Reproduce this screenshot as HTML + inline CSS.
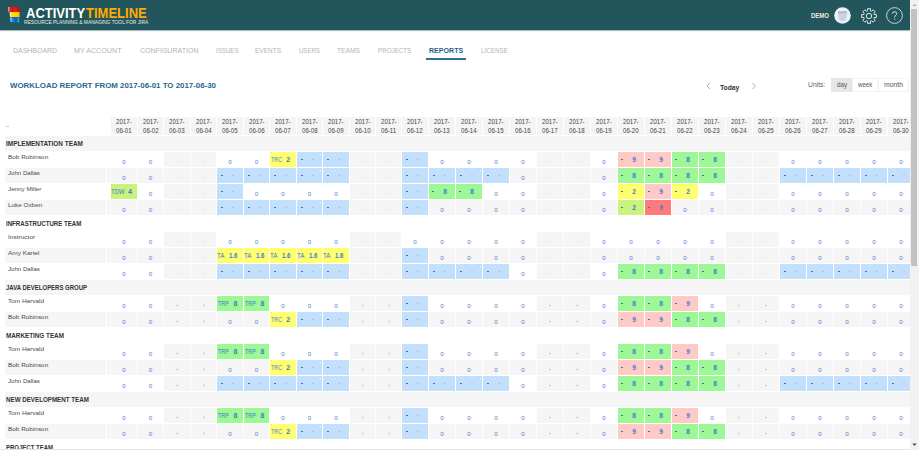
<!DOCTYPE html><html><head><meta charset="utf-8"><style>
html,body{margin:0;padding:0;width:919px;height:450px;overflow:hidden;background:#fff;font-family:"Liberation Sans", sans-serif;}
.t{position:absolute;white-space:nowrap;}
.r{position:absolute;}
#wrap{position:absolute;left:0;top:0;width:910px;height:450px;overflow:hidden;}
</style></head><body><div id="wrap">
<div class="r" style="left:0px;top:0px;width:910px;height:30px;background:#23565c;"></div>
<div class="r" style="left:0px;top:30px;width:910px;height:1px;background:#a9bec0;"></div>
<div class="r" style="left:0px;top:31px;width:910px;height:1px;background:#f7f9f9;"></div>
<svg class="r" style="left:7px;top:6px" width="14" height="18" viewBox="0 0 14 18">
<defs>
<linearGradient id="gr" x1="0" x2="1" y1="0" y2="0"><stop offset="0" stop-color="#f2b0b0"/><stop offset="0.25" stop-color="#e01010"/><stop offset="0.7" stop-color="#ff1010"/><stop offset="1" stop-color="#d00808"/></linearGradient>
<linearGradient id="gy" x1="0" x2="1" y1="0" y2="0"><stop offset="0" stop-color="#fff8b0"/><stop offset="0.25" stop-color="#ffe000"/><stop offset="0.7" stop-color="#ffd800"/><stop offset="1" stop-color="#f8b800"/></linearGradient>
<linearGradient id="gb" x1="0" x2="1" y1="0" y2="0"><stop offset="0" stop-color="#b0e0ff"/><stop offset="0.3" stop-color="#1a7ee0"/><stop offset="0.7" stop-color="#0a5fc8"/><stop offset="1" stop-color="#30b8ff"/></linearGradient>
</defs>
<polygon points="0.9,0.9 12.2,0.9 12.2,5.8 1.2,5.8" fill="url(#gr)"/>
<polygon points="2.6,6.1 12.6,6.1 12.6,11 3,11" fill="url(#gy)"/>
<polygon points="3.1,11.4 12.2,11.4 12.2,16.7 3.6,16.1" fill="url(#gb)"/>
</svg>
<div class="t" style="left:25.60px;top:4px;font-size:15.22px;line-height:17px;height:17px;color:#ffffff;font-weight:bold;transform:translateY(-0.5px) scaleX(0.8539);transform-origin:0 0;">ACTIVITY</div>
<div class="t" style="left:86.30px;top:4px;font-size:15.22px;line-height:17px;height:17px;color:#ffab00;font-weight:bold;transform:translateY(-0.5px) scaleX(0.8547);transform-origin:0 0;">TIMELINE</div>
<div class="t" style="left:24.20px;top:19px;font-size:5.07px;line-height:6px;height:6px;color:#e8eef0;font-weight:normal;transform:translateY(0px) scaleX(0.9630);transform-origin:0 0;">RESOURCE PLANNING &amp; MANAGING TOOL FOR JIRA</div>
<div class="t" style="left:811.00px;top:12px;font-size:6.52px;line-height:7px;height:7px;color:#f3ead8;font-weight:bold;transform:translateY(0px) scaleX(0.9200);transform-origin:0 0;">DEMO</div>
<svg class="r" style="left:833px;top:6px" width="20" height="20" viewBox="0 0 20 20">
<circle cx="9.5" cy="9.5" r="8.3" fill="#eef2f7"/>
<path d="M5,5.2 L14,5.2 Q14.6,11.5 12.3,14.3 Q9.5,16.4 6.7,14.3 Q4.4,11.5 5,5.2 Z" fill="#c8d5e1"/>
<path d="M5,5.2 L14,5.2 L13.9,7.6 L5.1,7.6 Z" fill="#aebfce"/>
</svg>
<svg class="r" style="left:860px;top:7px" width="18" height="18" viewBox="0 0 18 18">
<polygon points="14.19,7.50 16.35,7.50 16.35,10.50 14.19,10.50 13.73,11.61 15.26,13.14 13.14,15.26 11.61,13.73 10.50,14.19 10.50,16.35 7.50,16.35 7.50,14.19 6.39,13.73 4.86,15.26 2.74,13.14 4.27,11.61 3.81,10.50 1.65,10.50 1.65,7.50 3.81,7.50 4.27,6.39 2.74,4.86 4.86,2.74 6.39,4.27 7.50,3.81 7.50,1.65 10.50,1.65 10.50,3.81 11.61,4.27 13.14,2.74 15.26,4.86 13.73,6.39" fill="none" stroke="#dfe8e8" stroke-width="1" stroke-linejoin="miter"/>
<circle cx="9" cy="9" r="2.7" fill="none" stroke="#dfe8e8" stroke-width="1"/>
</svg>
<svg class="r" style="left:886px;top:7.3px" width="17" height="17" viewBox="0 0 17 17">
<circle cx="8.5" cy="8.5" r="7.9" fill="none" stroke="#d8e2e3" stroke-width="0.9"/>
<path d="M6.3,6.6 Q6.3,4.8 8.5,4.8 Q10.8,4.8 10.8,6.5 Q10.8,7.7 9.5,8.4 Q8.7,8.9 8.7,10.4" fill="none" stroke="#dfe8e8" stroke-width="1"/>
<rect x="8.2" y="11.6" width="1" height="1" fill="#dfe8e8"/>
</svg>
<div class="t" style="left:12.70px;top:47px;font-size:7.10px;line-height:8px;height:8px;color:#b4b4b4;font-weight:normal;transform:translateY(0px) scaleX(0.9823);transform-origin:0 0;">DASHBOARD</div>
<div class="t" style="left:74.30px;top:47px;font-size:7.10px;line-height:8px;height:8px;color:#b4b4b4;font-weight:normal;transform:translateY(0px) scaleX(1.0079);transform-origin:0 0;">MY ACCOUNT</div>
<div class="t" style="left:139.60px;top:47px;font-size:7.10px;line-height:8px;height:8px;color:#b4b4b4;font-weight:normal;transform:translateY(0px) scaleX(0.9923);transform-origin:0 0;">CONFIGURATION</div>
<div class="t" style="left:215.60px;top:47px;font-size:7.10px;line-height:8px;height:8px;color:#b4b4b4;font-weight:normal;transform:translateY(0px) scaleX(0.8674);transform-origin:0 0;">ISSUES</div>
<div class="t" style="left:255.00px;top:47px;font-size:7.10px;line-height:8px;height:8px;color:#b4b4b4;font-weight:normal;transform:translateY(0px) scaleX(0.9184);transform-origin:0 0;">EVENTS</div>
<div class="t" style="left:298.80px;top:47px;font-size:7.10px;line-height:8px;height:8px;color:#b4b4b4;font-weight:normal;transform:translateY(0px) scaleX(0.8502);transform-origin:0 0;">USERS</div>
<div class="t" style="left:337.00px;top:47px;font-size:7.10px;line-height:8px;height:8px;color:#b4b4b4;font-weight:normal;transform:translateY(0px) scaleX(0.9401);transform-origin:0 0;">TEAMS</div>
<div class="t" style="left:377.80px;top:47px;font-size:7.10px;line-height:8px;height:8px;color:#b4b4b4;font-weight:normal;transform:translateY(0px) scaleX(0.8791);transform-origin:0 0;">PROJECTS</div>
<div class="t" style="left:481.00px;top:47px;font-size:7.10px;line-height:8px;height:8px;color:#b4b4b4;font-weight:normal;transform:translateY(0px) scaleX(0.8850);transform-origin:0 0;">LICENSE</div>
<div class="t" style="left:428.80px;top:47px;font-size:7.10px;line-height:8px;height:8px;color:#1f5f8a;font-weight:bold;transform:translateY(0px) scaleX(0.9963);transform-origin:0 0;">REPORTS</div>
<div class="r" style="left:426px;top:57.5px;width:40px;height:2px;background:#2a6f98;"></div>
<div class="t" style="left:10.30px;top:82px;font-size:7.10px;line-height:8px;height:8px;color:#2a6690;font-weight:bold;transform:translateY(0px) scaleX(1.1127);transform-origin:0 0;">WORKLOAD REPORT FROM 2017-06-01 TO 2017-06-30</div>
<svg class="r" style="left:705px;top:82px" width="8" height="8" viewBox="0 0 8 8"><path d="M5,1 L2,4 L5,7" fill="none" stroke="#999" stroke-width="0.8"/></svg>
<svg class="r" style="left:750px;top:82px" width="8" height="8" viewBox="0 0 8 8"><path d="M2.5,1 L5.5,4 L2.5,7" fill="none" stroke="#999" stroke-width="0.8"/></svg>
<div class="t" style="left:720.30px;top:84px;font-size:6.81px;line-height:7px;height:7px;color:#333;font-weight:bold;transform:translateY(0px) scaleX(0.9866);transform-origin:0 0;">Today</div>
<div class="t" style="left:808.00px;top:81px;font-size:6.96px;line-height:7px;height:7px;color:#6b6357;font-weight:normal;transform:translateY(0px) scaleX(0.9786);transform-origin:0 0;">Units:</div>
<div class="r" style="left:831px;top:78px;width:21px;height:14px;background:#e6e6e6;"></div>
<div class="r" style="left:852px;top:78px;width:26px;height:14px;background:#fff;box-sizing:border-box;border:1px solid #f4f4f4;"></div>
<div class="r" style="left:877.5px;top:78px;width:31px;height:14px;background:#fff;box-sizing:border-box;border:1px solid #f4f4f4;"></div>
<div class="t" style="left:836.70px;top:81px;font-size:6.96px;line-height:7px;height:7px;color:#555;font-weight:normal;transform:translateY(0px) scaleX(0.9096);transform-origin:0 0;">day</div>
<div class="t" style="left:858.00px;top:81px;font-size:6.96px;line-height:7px;height:7px;color:#555;font-weight:normal;transform:translateY(0px) scaleX(0.8738);transform-origin:0 0;">week</div>
<div class="t" style="left:883.90px;top:81px;font-size:6.96px;line-height:7px;height:7px;color:#555;font-weight:normal;transform:translateY(0px) scaleX(0.9876);transform-origin:0 0;">month</div>
<div class="r" style="left:6px;top:126px;width:2.5px;height:0.8px;background:#c8c8c8;"></div>
<div class="r" style="left:111px;top:117px;width:26px;height:18px;background:#f4f4f4;"></div>
<div class="t" style="left:116.20px;top:118px;font-size:6.52px;line-height:7px;height:7px;color:#444;font-weight:normal;transform:translateY(0px) scaleX(0.9351);transform-origin:0 0;">2017-</div>
<div class="t" style="left:116.20px;top:127px;font-size:6.81px;line-height:7px;height:7px;color:#444;font-weight:normal;transform:translateY(0px) scaleX(0.8953);transform-origin:0 0;">06-01</div>
<div class="r" style="left:138px;top:117px;width:25px;height:18px;background:#f4f4f4;"></div>
<div class="t" style="left:142.70px;top:118px;font-size:6.52px;line-height:7px;height:7px;color:#444;font-weight:normal;transform:translateY(0px) scaleX(0.9351);transform-origin:0 0;">2017-</div>
<div class="t" style="left:142.70px;top:127px;font-size:6.81px;line-height:7px;height:7px;color:#444;font-weight:normal;transform:translateY(0px) scaleX(0.8953);transform-origin:0 0;">06-02</div>
<div class="r" style="left:164px;top:117px;width:26px;height:18px;background:#f4f4f4;"></div>
<div class="t" style="left:169.20px;top:118px;font-size:6.52px;line-height:7px;height:7px;color:#444;font-weight:normal;transform:translateY(0px) scaleX(0.9351);transform-origin:0 0;">2017-</div>
<div class="t" style="left:169.20px;top:127px;font-size:6.81px;line-height:7px;height:7px;color:#444;font-weight:normal;transform:translateY(0px) scaleX(0.8953);transform-origin:0 0;">06-03</div>
<div class="r" style="left:191px;top:117px;width:25px;height:18px;background:#f4f4f4;"></div>
<div class="t" style="left:195.70px;top:118px;font-size:6.52px;line-height:7px;height:7px;color:#444;font-weight:normal;transform:translateY(0px) scaleX(0.9351);transform-origin:0 0;">2017-</div>
<div class="t" style="left:195.70px;top:127px;font-size:6.81px;line-height:7px;height:7px;color:#444;font-weight:normal;transform:translateY(0px) scaleX(0.8953);transform-origin:0 0;">06-04</div>
<div class="r" style="left:217px;top:117px;width:26px;height:18px;background:#f4f4f4;"></div>
<div class="t" style="left:222.20px;top:118px;font-size:6.52px;line-height:7px;height:7px;color:#444;font-weight:normal;transform:translateY(0px) scaleX(0.9351);transform-origin:0 0;">2017-</div>
<div class="t" style="left:222.20px;top:127px;font-size:6.81px;line-height:7px;height:7px;color:#444;font-weight:normal;transform:translateY(0px) scaleX(0.8953);transform-origin:0 0;">06-05</div>
<div class="r" style="left:244px;top:117px;width:25px;height:18px;background:#f4f4f4;"></div>
<div class="t" style="left:248.70px;top:118px;font-size:6.52px;line-height:7px;height:7px;color:#444;font-weight:normal;transform:translateY(0px) scaleX(0.9351);transform-origin:0 0;">2017-</div>
<div class="t" style="left:248.70px;top:127px;font-size:6.81px;line-height:7px;height:7px;color:#444;font-weight:normal;transform:translateY(0px) scaleX(0.8953);transform-origin:0 0;">06-06</div>
<div class="r" style="left:270px;top:117px;width:26px;height:18px;background:#f4f4f4;"></div>
<div class="t" style="left:275.20px;top:118px;font-size:6.52px;line-height:7px;height:7px;color:#444;font-weight:normal;transform:translateY(0px) scaleX(0.9351);transform-origin:0 0;">2017-</div>
<div class="t" style="left:275.20px;top:127px;font-size:6.81px;line-height:7px;height:7px;color:#444;font-weight:normal;transform:translateY(0px) scaleX(0.8953);transform-origin:0 0;">06-07</div>
<div class="r" style="left:297px;top:117px;width:25px;height:18px;background:#f4f4f4;"></div>
<div class="t" style="left:301.70px;top:118px;font-size:6.52px;line-height:7px;height:7px;color:#444;font-weight:normal;transform:translateY(0px) scaleX(0.9351);transform-origin:0 0;">2017-</div>
<div class="t" style="left:301.70px;top:127px;font-size:6.81px;line-height:7px;height:7px;color:#444;font-weight:normal;transform:translateY(0px) scaleX(0.8953);transform-origin:0 0;">06-08</div>
<div class="r" style="left:323px;top:117px;width:26px;height:18px;background:#f4f4f4;"></div>
<div class="t" style="left:328.20px;top:118px;font-size:6.52px;line-height:7px;height:7px;color:#444;font-weight:normal;transform:translateY(0px) scaleX(0.9351);transform-origin:0 0;">2017-</div>
<div class="t" style="left:328.20px;top:127px;font-size:6.81px;line-height:7px;height:7px;color:#444;font-weight:normal;transform:translateY(0px) scaleX(0.8953);transform-origin:0 0;">06-09</div>
<div class="r" style="left:350px;top:117px;width:25px;height:18px;background:#f4f4f4;"></div>
<div class="t" style="left:354.70px;top:118px;font-size:6.52px;line-height:7px;height:7px;color:#444;font-weight:normal;transform:translateY(0px) scaleX(0.9351);transform-origin:0 0;">2017-</div>
<div class="t" style="left:354.70px;top:127px;font-size:6.81px;line-height:7px;height:7px;color:#444;font-weight:normal;transform:translateY(0px) scaleX(0.8953);transform-origin:0 0;">06-10</div>
<div class="r" style="left:376px;top:117px;width:25px;height:18px;background:#f4f4f4;"></div>
<div class="t" style="left:380.70px;top:118px;font-size:6.52px;line-height:7px;height:7px;color:#444;font-weight:normal;transform:translateY(0px) scaleX(0.9351);transform-origin:0 0;">2017-</div>
<div class="t" style="left:380.70px;top:127px;font-size:6.81px;line-height:7px;height:7px;color:#444;font-weight:normal;transform:translateY(0px) scaleX(0.8953);transform-origin:0 0;">06-11</div>
<div class="r" style="left:402px;top:117px;width:26px;height:18px;background:#f4f4f4;"></div>
<div class="t" style="left:407.20px;top:118px;font-size:6.52px;line-height:7px;height:7px;color:#444;font-weight:normal;transform:translateY(0px) scaleX(0.9351);transform-origin:0 0;">2017-</div>
<div class="t" style="left:407.20px;top:127px;font-size:6.81px;line-height:7px;height:7px;color:#444;font-weight:normal;transform:translateY(0px) scaleX(0.8953);transform-origin:0 0;">06-12</div>
<div class="r" style="left:429px;top:117px;width:26px;height:18px;background:#f4f4f4;"></div>
<div class="t" style="left:434.20px;top:118px;font-size:6.52px;line-height:7px;height:7px;color:#444;font-weight:normal;transform:translateY(0px) scaleX(0.9351);transform-origin:0 0;">2017-</div>
<div class="t" style="left:434.20px;top:127px;font-size:6.81px;line-height:7px;height:7px;color:#444;font-weight:normal;transform:translateY(0px) scaleX(0.8953);transform-origin:0 0;">06-13</div>
<div class="r" style="left:456px;top:117px;width:26px;height:18px;background:#f4f4f4;"></div>
<div class="t" style="left:461.20px;top:118px;font-size:6.52px;line-height:7px;height:7px;color:#444;font-weight:normal;transform:translateY(0px) scaleX(0.9351);transform-origin:0 0;">2017-</div>
<div class="t" style="left:461.20px;top:127px;font-size:6.81px;line-height:7px;height:7px;color:#444;font-weight:normal;transform:translateY(0px) scaleX(0.8953);transform-origin:0 0;">06-14</div>
<div class="r" style="left:483px;top:117px;width:26px;height:18px;background:#f4f4f4;"></div>
<div class="t" style="left:488.20px;top:118px;font-size:6.52px;line-height:7px;height:7px;color:#444;font-weight:normal;transform:translateY(0px) scaleX(0.9351);transform-origin:0 0;">2017-</div>
<div class="t" style="left:488.20px;top:127px;font-size:6.81px;line-height:7px;height:7px;color:#444;font-weight:normal;transform:translateY(0px) scaleX(0.8953);transform-origin:0 0;">06-15</div>
<div class="r" style="left:510px;top:117px;width:26px;height:18px;background:#f4f4f4;"></div>
<div class="t" style="left:515.20px;top:118px;font-size:6.52px;line-height:7px;height:7px;color:#444;font-weight:normal;transform:translateY(0px) scaleX(0.9351);transform-origin:0 0;">2017-</div>
<div class="t" style="left:515.20px;top:127px;font-size:6.81px;line-height:7px;height:7px;color:#444;font-weight:normal;transform:translateY(0px) scaleX(0.8953);transform-origin:0 0;">06-16</div>
<div class="r" style="left:537px;top:117px;width:26px;height:18px;background:#f4f4f4;"></div>
<div class="t" style="left:542.20px;top:118px;font-size:6.52px;line-height:7px;height:7px;color:#444;font-weight:normal;transform:translateY(0px) scaleX(0.9351);transform-origin:0 0;">2017-</div>
<div class="t" style="left:542.20px;top:127px;font-size:6.81px;line-height:7px;height:7px;color:#444;font-weight:normal;transform:translateY(0px) scaleX(0.8953);transform-origin:0 0;">06-17</div>
<div class="r" style="left:564px;top:117px;width:26px;height:18px;background:#f4f4f4;"></div>
<div class="t" style="left:569.20px;top:118px;font-size:6.52px;line-height:7px;height:7px;color:#444;font-weight:normal;transform:translateY(0px) scaleX(0.9351);transform-origin:0 0;">2017-</div>
<div class="t" style="left:569.20px;top:127px;font-size:6.81px;line-height:7px;height:7px;color:#444;font-weight:normal;transform:translateY(0px) scaleX(0.8953);transform-origin:0 0;">06-18</div>
<div class="r" style="left:591px;top:117px;width:26px;height:18px;background:#f4f4f4;"></div>
<div class="t" style="left:596.20px;top:118px;font-size:6.52px;line-height:7px;height:7px;color:#444;font-weight:normal;transform:translateY(0px) scaleX(0.9351);transform-origin:0 0;">2017-</div>
<div class="t" style="left:596.20px;top:127px;font-size:6.81px;line-height:7px;height:7px;color:#444;font-weight:normal;transform:translateY(0px) scaleX(0.8953);transform-origin:0 0;">06-19</div>
<div class="r" style="left:618px;top:117px;width:26px;height:18px;background:#f4f4f4;"></div>
<div class="t" style="left:623.20px;top:118px;font-size:6.52px;line-height:7px;height:7px;color:#444;font-weight:normal;transform:translateY(0px) scaleX(0.9351);transform-origin:0 0;">2017-</div>
<div class="t" style="left:623.20px;top:127px;font-size:6.81px;line-height:7px;height:7px;color:#444;font-weight:normal;transform:translateY(0px) scaleX(0.8953);transform-origin:0 0;">06-20</div>
<div class="r" style="left:645px;top:117px;width:26px;height:18px;background:#f4f4f4;"></div>
<div class="t" style="left:650.20px;top:118px;font-size:6.52px;line-height:7px;height:7px;color:#444;font-weight:normal;transform:translateY(0px) scaleX(0.9351);transform-origin:0 0;">2017-</div>
<div class="t" style="left:650.20px;top:127px;font-size:6.81px;line-height:7px;height:7px;color:#444;font-weight:normal;transform:translateY(0px) scaleX(0.8953);transform-origin:0 0;">06-21</div>
<div class="r" style="left:672px;top:117px;width:26px;height:18px;background:#f4f4f4;"></div>
<div class="t" style="left:677.20px;top:118px;font-size:6.52px;line-height:7px;height:7px;color:#444;font-weight:normal;transform:translateY(0px) scaleX(0.9351);transform-origin:0 0;">2017-</div>
<div class="t" style="left:677.20px;top:127px;font-size:6.81px;line-height:7px;height:7px;color:#444;font-weight:normal;transform:translateY(0px) scaleX(0.8953);transform-origin:0 0;">06-22</div>
<div class="r" style="left:699px;top:117px;width:26px;height:18px;background:#f4f4f4;"></div>
<div class="t" style="left:704.20px;top:118px;font-size:6.52px;line-height:7px;height:7px;color:#444;font-weight:normal;transform:translateY(0px) scaleX(0.9351);transform-origin:0 0;">2017-</div>
<div class="t" style="left:704.20px;top:127px;font-size:6.81px;line-height:7px;height:7px;color:#444;font-weight:normal;transform:translateY(0px) scaleX(0.8953);transform-origin:0 0;">06-23</div>
<div class="r" style="left:726px;top:117px;width:26px;height:18px;background:#f4f4f4;"></div>
<div class="t" style="left:731.20px;top:118px;font-size:6.52px;line-height:7px;height:7px;color:#444;font-weight:normal;transform:translateY(0px) scaleX(0.9351);transform-origin:0 0;">2017-</div>
<div class="t" style="left:731.20px;top:127px;font-size:6.81px;line-height:7px;height:7px;color:#444;font-weight:normal;transform:translateY(0px) scaleX(0.8953);transform-origin:0 0;">06-24</div>
<div class="r" style="left:753px;top:117px;width:26px;height:18px;background:#f4f4f4;"></div>
<div class="t" style="left:758.20px;top:118px;font-size:6.52px;line-height:7px;height:7px;color:#444;font-weight:normal;transform:translateY(0px) scaleX(0.9351);transform-origin:0 0;">2017-</div>
<div class="t" style="left:758.20px;top:127px;font-size:6.81px;line-height:7px;height:7px;color:#444;font-weight:normal;transform:translateY(0px) scaleX(0.8953);transform-origin:0 0;">06-25</div>
<div class="r" style="left:780px;top:117px;width:26px;height:18px;background:#f4f4f4;"></div>
<div class="t" style="left:785.20px;top:118px;font-size:6.52px;line-height:7px;height:7px;color:#444;font-weight:normal;transform:translateY(0px) scaleX(0.9351);transform-origin:0 0;">2017-</div>
<div class="t" style="left:785.20px;top:127px;font-size:6.81px;line-height:7px;height:7px;color:#444;font-weight:normal;transform:translateY(0px) scaleX(0.8953);transform-origin:0 0;">06-26</div>
<div class="r" style="left:807px;top:117px;width:26px;height:18px;background:#f4f4f4;"></div>
<div class="t" style="left:812.20px;top:118px;font-size:6.52px;line-height:7px;height:7px;color:#444;font-weight:normal;transform:translateY(0px) scaleX(0.9351);transform-origin:0 0;">2017-</div>
<div class="t" style="left:812.20px;top:127px;font-size:6.81px;line-height:7px;height:7px;color:#444;font-weight:normal;transform:translateY(0px) scaleX(0.8953);transform-origin:0 0;">06-27</div>
<div class="r" style="left:834px;top:117px;width:26px;height:18px;background:#f4f4f4;"></div>
<div class="t" style="left:839.20px;top:118px;font-size:6.52px;line-height:7px;height:7px;color:#444;font-weight:normal;transform:translateY(0px) scaleX(0.9351);transform-origin:0 0;">2017-</div>
<div class="t" style="left:839.20px;top:127px;font-size:6.81px;line-height:7px;height:7px;color:#444;font-weight:normal;transform:translateY(0px) scaleX(0.8953);transform-origin:0 0;">06-28</div>
<div class="r" style="left:861px;top:117px;width:26px;height:18px;background:#f4f4f4;"></div>
<div class="t" style="left:866.20px;top:118px;font-size:6.52px;line-height:7px;height:7px;color:#444;font-weight:normal;transform:translateY(0px) scaleX(0.9351);transform-origin:0 0;">2017-</div>
<div class="t" style="left:866.20px;top:127px;font-size:6.81px;line-height:7px;height:7px;color:#444;font-weight:normal;transform:translateY(0px) scaleX(0.8953);transform-origin:0 0;">06-29</div>
<div class="r" style="left:888px;top:117px;width:26px;height:18px;background:#f4f4f4;"></div>
<div class="t" style="left:893.20px;top:118px;font-size:6.52px;line-height:7px;height:7px;color:#444;font-weight:normal;transform:translateY(0px) scaleX(0.9351);transform-origin:0 0;">2017-</div>
<div class="t" style="left:893.20px;top:127px;font-size:6.81px;line-height:7px;height:7px;color:#444;font-weight:normal;transform:translateY(0px) scaleX(0.8953);transform-origin:0 0;">06-30</div>
<div class="r" style="left:5px;top:136px;width:905px;height:15px;background:#f5f5f5;"></div>
<div class="t" style="left:6.10px;top:139px;font-size:7.25px;line-height:9px;height:9px;color:#333;font-weight:bold;transform:translateY(0px) scaleX(0.8872);transform-origin:0 0;">IMPLEMENTATION TEAM</div>
<div class="t" style="left:7.90px;top:154px;font-size:5.80px;line-height:6px;height:6px;color:#4a4a4a;font-weight:normal;transform:translateY(0px) scaleX(1.1037);transform-origin:0 0;">Bob Robinson</div>
<div class="t" style="left:122.30px;top:158px;font-size:6.14px;line-height:7px;height:7px;color:#4a7fd6;font-weight:normal;">0</div>
<div class="t" style="left:148.80px;top:158px;font-size:6.14px;line-height:7px;height:7px;color:#4a7fd6;font-weight:normal;">0</div>
<div class="r" style="left:164px;top:152px;width:26px;height:15px;background:#f5f5f5;"></div>
<div class="r" style="left:176.0px;top:161.7px;width:2px;height:0.8px;background:#e2e7ee;"></div>
<div class="r" style="left:191px;top:152px;width:25px;height:15px;background:#f5f5f5;"></div>
<div class="r" style="left:202.5px;top:161.7px;width:2px;height:0.8px;background:#e2e7ee;"></div>
<div class="t" style="left:228.30px;top:158px;font-size:6.14px;line-height:7px;height:7px;color:#4a7fd6;font-weight:normal;">0</div>
<div class="t" style="left:254.80px;top:158px;font-size:6.14px;line-height:7px;height:7px;color:#4a7fd6;font-weight:normal;">0</div>
<div class="r" style="left:270px;top:152px;width:26px;height:15px;background:#ffff6e;"></div>
<div class="t" style="left:271.00px;top:156px;font-size:6.96px;line-height:7px;height:7px;color:#4a7fcf;font-weight:normal;transform:translateY(0px) scaleX(0.7691);transform-origin:0 0;">TRC</div>
<div class="t" style="left:286.30px;top:156px;font-size:6.96px;line-height:7px;height:7px;color:#3a78de;font-weight:bold;">2</div>
<div class="r" style="left:297px;top:152px;width:25px;height:15px;background:#c2dffb;"></div>
<div class="r" style="left:300.6px;top:159.2px;width:2.4px;height:0.9px;background:#3a6fd0;"></div>
<div class="r" style="left:311.8px;top:159.3px;width:2.0px;height:0.8px;background:#a9c8f0;"></div>
<div class="r" style="left:323px;top:152px;width:26px;height:15px;background:#c2dffb;"></div>
<div class="r" style="left:326.6px;top:159.2px;width:2.4px;height:0.9px;background:#3a6fd0;"></div>
<div class="r" style="left:337.8px;top:159.3px;width:2.0px;height:0.8px;background:#a9c8f0;"></div>
<div class="r" style="left:350px;top:152px;width:25px;height:15px;background:#f5f5f5;"></div>
<div class="r" style="left:361.5px;top:161.7px;width:2px;height:0.8px;background:#e2e7ee;"></div>
<div class="r" style="left:376px;top:152px;width:25px;height:15px;background:#f5f5f5;"></div>
<div class="r" style="left:387.5px;top:161.7px;width:2px;height:0.8px;background:#e2e7ee;"></div>
<div class="r" style="left:402px;top:152px;width:26px;height:15px;background:#c2dffb;"></div>
<div class="r" style="left:405.6px;top:159.2px;width:2.4px;height:0.9px;background:#3a6fd0;"></div>
<div class="r" style="left:416.8px;top:159.3px;width:2.0px;height:0.8px;background:#a9c8f0;"></div>
<div class="t" style="left:440.30px;top:158px;font-size:6.14px;line-height:7px;height:7px;color:#4a7fd6;font-weight:normal;">0</div>
<div class="t" style="left:467.30px;top:158px;font-size:6.14px;line-height:7px;height:7px;color:#4a7fd6;font-weight:normal;">0</div>
<div class="t" style="left:494.30px;top:158px;font-size:6.14px;line-height:7px;height:7px;color:#4a7fd6;font-weight:normal;">0</div>
<div class="t" style="left:521.30px;top:158px;font-size:6.14px;line-height:7px;height:7px;color:#4a7fd6;font-weight:normal;">0</div>
<div class="r" style="left:537px;top:152px;width:26px;height:15px;background:#f5f5f5;"></div>
<div class="r" style="left:549.0px;top:161.7px;width:2px;height:0.8px;background:#e2e7ee;"></div>
<div class="r" style="left:564px;top:152px;width:26px;height:15px;background:#f5f5f5;"></div>
<div class="r" style="left:576.0px;top:161.7px;width:2px;height:0.8px;background:#e2e7ee;"></div>
<div class="t" style="left:602.30px;top:158px;font-size:6.14px;line-height:7px;height:7px;color:#4a7fd6;font-weight:normal;">0</div>
<div class="r" style="left:618px;top:152px;width:26px;height:15px;background:#ffcac6;"></div>
<div class="r" style="left:621px;top:159.3px;width:2.2px;height:0.9px;background:#3a6fd0;"></div>
<div class="t" style="left:632.20px;top:156px;font-size:6.57px;line-height:7px;height:7px;color:#3a78de;font-weight:bold;">9</div>
<div class="r" style="left:645px;top:152px;width:26px;height:15px;background:#ffcac6;"></div>
<div class="r" style="left:648px;top:159.3px;width:2.2px;height:0.9px;background:#3a6fd0;"></div>
<div class="t" style="left:659.20px;top:156px;font-size:6.57px;line-height:7px;height:7px;color:#3a78de;font-weight:bold;">9</div>
<div class="r" style="left:672px;top:152px;width:26px;height:15px;background:#9cf794;"></div>
<div class="r" style="left:675px;top:159.3px;width:2.2px;height:0.9px;background:#3a6fd0;"></div>
<div class="t" style="left:686.20px;top:156px;font-size:6.57px;line-height:7px;height:7px;color:#3a78de;font-weight:bold;">8</div>
<div class="r" style="left:699px;top:152px;width:26px;height:15px;background:#9cf794;"></div>
<div class="r" style="left:702px;top:159.3px;width:2.2px;height:0.9px;background:#3a6fd0;"></div>
<div class="t" style="left:713.20px;top:156px;font-size:6.57px;line-height:7px;height:7px;color:#3a78de;font-weight:bold;">8</div>
<div class="r" style="left:726px;top:152px;width:26px;height:15px;background:#f5f5f5;"></div>
<div class="r" style="left:738.0px;top:161.7px;width:2px;height:0.8px;background:#e2e7ee;"></div>
<div class="r" style="left:753px;top:152px;width:26px;height:15px;background:#f5f5f5;"></div>
<div class="r" style="left:765.0px;top:161.7px;width:2px;height:0.8px;background:#e2e7ee;"></div>
<div class="t" style="left:791.30px;top:158px;font-size:6.14px;line-height:7px;height:7px;color:#4a7fd6;font-weight:normal;">0</div>
<div class="t" style="left:818.30px;top:158px;font-size:6.14px;line-height:7px;height:7px;color:#4a7fd6;font-weight:normal;">0</div>
<div class="t" style="left:845.30px;top:158px;font-size:6.14px;line-height:7px;height:7px;color:#4a7fd6;font-weight:normal;">0</div>
<div class="t" style="left:872.30px;top:158px;font-size:6.14px;line-height:7px;height:7px;color:#4a7fd6;font-weight:normal;">0</div>
<div class="t" style="left:899.30px;top:158px;font-size:6.14px;line-height:7px;height:7px;color:#4a7fd6;font-weight:normal;">0</div>
<div class="r" style="left:5px;top:168px;width:101px;height:15px;background:#f5f5f5;"></div>
<div class="r" style="left:107px;top:168px;width:3px;height:15px;background:#f5f5f5;"></div>
<div class="t" style="left:7.90px;top:170px;font-size:5.80px;line-height:6px;height:6px;color:#4a4a4a;font-weight:normal;transform:translateY(0px) scaleX(1.0528);transform-origin:0 0;">John Dallas</div>
<div class="r" style="left:111px;top:168px;width:26px;height:15px;background:#f5f5f5;"></div>
<div class="t" style="left:122.30px;top:174px;font-size:6.14px;line-height:7px;height:7px;color:#4a7fd6;font-weight:normal;">0</div>
<div class="r" style="left:138px;top:168px;width:25px;height:15px;background:#f5f5f5;"></div>
<div class="t" style="left:148.80px;top:174px;font-size:6.14px;line-height:7px;height:7px;color:#4a7fd6;font-weight:normal;">0</div>
<div class="r" style="left:164px;top:168px;width:26px;height:15px;background:#f5f5f5;"></div>
<div class="r" style="left:176.0px;top:177.7px;width:2px;height:0.8px;background:#e2e7ee;"></div>
<div class="r" style="left:191px;top:168px;width:25px;height:15px;background:#f5f5f5;"></div>
<div class="r" style="left:202.5px;top:177.7px;width:2px;height:0.8px;background:#e2e7ee;"></div>
<div class="r" style="left:217px;top:168px;width:26px;height:15px;background:#c2dffb;"></div>
<div class="r" style="left:220.6px;top:175.2px;width:2.4px;height:0.9px;background:#3a6fd0;"></div>
<div class="r" style="left:231.8px;top:175.3px;width:2.0px;height:0.8px;background:#a9c8f0;"></div>
<div class="r" style="left:244px;top:168px;width:25px;height:15px;background:#c2dffb;"></div>
<div class="r" style="left:247.6px;top:175.2px;width:2.4px;height:0.9px;background:#3a6fd0;"></div>
<div class="r" style="left:258.8px;top:175.3px;width:2.0px;height:0.8px;background:#a9c8f0;"></div>
<div class="r" style="left:270px;top:168px;width:26px;height:15px;background:#c2dffb;"></div>
<div class="r" style="left:273.6px;top:175.2px;width:2.4px;height:0.9px;background:#3a6fd0;"></div>
<div class="r" style="left:284.8px;top:175.3px;width:2.0px;height:0.8px;background:#a9c8f0;"></div>
<div class="r" style="left:297px;top:168px;width:25px;height:15px;background:#c2dffb;"></div>
<div class="r" style="left:300.6px;top:175.2px;width:2.4px;height:0.9px;background:#3a6fd0;"></div>
<div class="r" style="left:311.8px;top:175.3px;width:2.0px;height:0.8px;background:#a9c8f0;"></div>
<div class="r" style="left:323px;top:168px;width:26px;height:15px;background:#c2dffb;"></div>
<div class="r" style="left:326.6px;top:175.2px;width:2.4px;height:0.9px;background:#3a6fd0;"></div>
<div class="r" style="left:337.8px;top:175.3px;width:2.0px;height:0.8px;background:#a9c8f0;"></div>
<div class="r" style="left:350px;top:168px;width:25px;height:15px;background:#f5f5f5;"></div>
<div class="r" style="left:361.5px;top:177.7px;width:2px;height:0.8px;background:#e2e7ee;"></div>
<div class="r" style="left:376px;top:168px;width:25px;height:15px;background:#f5f5f5;"></div>
<div class="r" style="left:387.5px;top:177.7px;width:2px;height:0.8px;background:#e2e7ee;"></div>
<div class="r" style="left:402px;top:168px;width:26px;height:15px;background:#c2dffb;"></div>
<div class="r" style="left:405.6px;top:175.2px;width:2.4px;height:0.9px;background:#3a6fd0;"></div>
<div class="r" style="left:416.8px;top:175.3px;width:2.0px;height:0.8px;background:#a9c8f0;"></div>
<div class="r" style="left:429px;top:168px;width:26px;height:15px;background:#c2dffb;"></div>
<div class="r" style="left:432.6px;top:175.2px;width:2.4px;height:0.9px;background:#3a6fd0;"></div>
<div class="r" style="left:443.8px;top:175.3px;width:2.0px;height:0.8px;background:#a9c8f0;"></div>
<div class="r" style="left:456px;top:168px;width:26px;height:15px;background:#c2dffb;"></div>
<div class="r" style="left:459.6px;top:175.2px;width:2.4px;height:0.9px;background:#3a6fd0;"></div>
<div class="r" style="left:470.8px;top:175.3px;width:2.0px;height:0.8px;background:#a9c8f0;"></div>
<div class="r" style="left:483px;top:168px;width:26px;height:15px;background:#c2dffb;"></div>
<div class="r" style="left:486.6px;top:175.2px;width:2.4px;height:0.9px;background:#3a6fd0;"></div>
<div class="r" style="left:497.8px;top:175.3px;width:2.0px;height:0.8px;background:#a9c8f0;"></div>
<div class="r" style="left:510px;top:168px;width:26px;height:15px;background:#f5f5f5;"></div>
<div class="t" style="left:521.30px;top:174px;font-size:6.14px;line-height:7px;height:7px;color:#4a7fd6;font-weight:normal;">0</div>
<div class="r" style="left:537px;top:168px;width:26px;height:15px;background:#f5f5f5;"></div>
<div class="r" style="left:549.0px;top:177.7px;width:2px;height:0.8px;background:#e2e7ee;"></div>
<div class="r" style="left:564px;top:168px;width:26px;height:15px;background:#f5f5f5;"></div>
<div class="r" style="left:576.0px;top:177.7px;width:2px;height:0.8px;background:#e2e7ee;"></div>
<div class="r" style="left:591px;top:168px;width:26px;height:15px;background:#f5f5f5;"></div>
<div class="t" style="left:602.30px;top:174px;font-size:6.14px;line-height:7px;height:7px;color:#4a7fd6;font-weight:normal;">0</div>
<div class="r" style="left:618px;top:168px;width:26px;height:15px;background:#9cf794;"></div>
<div class="r" style="left:621px;top:175.3px;width:2.2px;height:0.9px;background:#3a6fd0;"></div>
<div class="t" style="left:632.20px;top:172px;font-size:6.57px;line-height:7px;height:7px;color:#3a78de;font-weight:bold;">8</div>
<div class="r" style="left:645px;top:168px;width:26px;height:15px;background:#9cf794;"></div>
<div class="r" style="left:648px;top:175.3px;width:2.2px;height:0.9px;background:#3a6fd0;"></div>
<div class="t" style="left:659.20px;top:172px;font-size:6.57px;line-height:7px;height:7px;color:#3a78de;font-weight:bold;">8</div>
<div class="r" style="left:672px;top:168px;width:26px;height:15px;background:#9cf794;"></div>
<div class="r" style="left:675px;top:175.3px;width:2.2px;height:0.9px;background:#3a6fd0;"></div>
<div class="t" style="left:686.20px;top:172px;font-size:6.57px;line-height:7px;height:7px;color:#3a78de;font-weight:bold;">8</div>
<div class="r" style="left:699px;top:168px;width:26px;height:15px;background:#9cf794;"></div>
<div class="r" style="left:702px;top:175.3px;width:2.2px;height:0.9px;background:#3a6fd0;"></div>
<div class="t" style="left:713.20px;top:172px;font-size:6.57px;line-height:7px;height:7px;color:#3a78de;font-weight:bold;">8</div>
<div class="r" style="left:726px;top:168px;width:26px;height:15px;background:#f5f5f5;"></div>
<div class="r" style="left:738.0px;top:177.7px;width:2px;height:0.8px;background:#e2e7ee;"></div>
<div class="r" style="left:753px;top:168px;width:26px;height:15px;background:#f5f5f5;"></div>
<div class="r" style="left:765.0px;top:177.7px;width:2px;height:0.8px;background:#e2e7ee;"></div>
<div class="r" style="left:780px;top:168px;width:26px;height:15px;background:#c2dffb;"></div>
<div class="r" style="left:783.6px;top:175.2px;width:2.4px;height:0.9px;background:#3a6fd0;"></div>
<div class="r" style="left:794.8px;top:175.3px;width:2.0px;height:0.8px;background:#a9c8f0;"></div>
<div class="r" style="left:807px;top:168px;width:26px;height:15px;background:#c2dffb;"></div>
<div class="r" style="left:810.6px;top:175.2px;width:2.4px;height:0.9px;background:#3a6fd0;"></div>
<div class="r" style="left:821.8px;top:175.3px;width:2.0px;height:0.8px;background:#a9c8f0;"></div>
<div class="r" style="left:834px;top:168px;width:26px;height:15px;background:#c2dffb;"></div>
<div class="r" style="left:837.6px;top:175.2px;width:2.4px;height:0.9px;background:#3a6fd0;"></div>
<div class="r" style="left:848.8px;top:175.3px;width:2.0px;height:0.8px;background:#a9c8f0;"></div>
<div class="r" style="left:861px;top:168px;width:26px;height:15px;background:#c2dffb;"></div>
<div class="r" style="left:864.6px;top:175.2px;width:2.4px;height:0.9px;background:#3a6fd0;"></div>
<div class="r" style="left:875.8px;top:175.3px;width:2.0px;height:0.8px;background:#a9c8f0;"></div>
<div class="r" style="left:888px;top:168px;width:26px;height:15px;background:#c2dffb;"></div>
<div class="r" style="left:891.6px;top:175.2px;width:2.4px;height:0.9px;background:#3a6fd0;"></div>
<div class="r" style="left:902.8px;top:175.3px;width:2.0px;height:0.8px;background:#a9c8f0;"></div>
<div class="t" style="left:7.90px;top:186px;font-size:5.80px;line-height:6px;height:6px;color:#4a4a4a;font-weight:normal;transform:translateY(0px) scaleX(1.0797);transform-origin:0 0;">Jenny Miller</div>
<div class="r" style="left:111px;top:184px;width:26px;height:15px;background:#cbf27a;"></div>
<div class="t" style="left:111.30px;top:188px;font-size:6.96px;line-height:7px;height:7px;color:#3f78d6;font-weight:normal;transform:translateY(0px) scaleX(0.8582);transform-origin:0 0;">TDW</div>
<div class="t" style="left:128.00px;top:188px;font-size:6.96px;line-height:7px;height:7px;color:#3a78de;font-weight:bold;">4</div>
<div class="t" style="left:148.80px;top:190px;font-size:6.14px;line-height:7px;height:7px;color:#4a7fd6;font-weight:normal;">0</div>
<div class="r" style="left:164px;top:184px;width:26px;height:15px;background:#f5f5f5;"></div>
<div class="r" style="left:176.0px;top:193.7px;width:2px;height:0.8px;background:#e2e7ee;"></div>
<div class="r" style="left:191px;top:184px;width:25px;height:15px;background:#f5f5f5;"></div>
<div class="r" style="left:202.5px;top:193.7px;width:2px;height:0.8px;background:#e2e7ee;"></div>
<div class="r" style="left:217px;top:184px;width:26px;height:15px;background:#c2dffb;"></div>
<div class="r" style="left:220.6px;top:191.2px;width:2.4px;height:0.9px;background:#3a6fd0;"></div>
<div class="r" style="left:231.8px;top:191.3px;width:2.0px;height:0.8px;background:#a9c8f0;"></div>
<div class="t" style="left:254.80px;top:190px;font-size:6.14px;line-height:7px;height:7px;color:#4a7fd6;font-weight:normal;">0</div>
<div class="t" style="left:281.30px;top:190px;font-size:6.14px;line-height:7px;height:7px;color:#4a7fd6;font-weight:normal;">0</div>
<div class="t" style="left:307.80px;top:190px;font-size:6.14px;line-height:7px;height:7px;color:#4a7fd6;font-weight:normal;">0</div>
<div class="t" style="left:334.30px;top:190px;font-size:6.14px;line-height:7px;height:7px;color:#4a7fd6;font-weight:normal;">0</div>
<div class="r" style="left:350px;top:184px;width:25px;height:15px;background:#f5f5f5;"></div>
<div class="r" style="left:361.5px;top:193.7px;width:2px;height:0.8px;background:#e2e7ee;"></div>
<div class="r" style="left:376px;top:184px;width:25px;height:15px;background:#f5f5f5;"></div>
<div class="r" style="left:387.5px;top:193.7px;width:2px;height:0.8px;background:#e2e7ee;"></div>
<div class="r" style="left:402px;top:184px;width:26px;height:15px;background:#c2dffb;"></div>
<div class="r" style="left:405.6px;top:191.2px;width:2.4px;height:0.9px;background:#3a6fd0;"></div>
<div class="r" style="left:416.8px;top:191.3px;width:2.0px;height:0.8px;background:#a9c8f0;"></div>
<div class="r" style="left:429px;top:184px;width:26px;height:15px;background:#9cf794;"></div>
<div class="r" style="left:432px;top:191.3px;width:2.2px;height:0.9px;background:#3a6fd0;"></div>
<div class="t" style="left:443.20px;top:188px;font-size:6.57px;line-height:7px;height:7px;color:#3a78de;font-weight:bold;">8</div>
<div class="r" style="left:456px;top:184px;width:26px;height:15px;background:#9cf794;"></div>
<div class="r" style="left:459px;top:191.3px;width:2.2px;height:0.9px;background:#3a6fd0;"></div>
<div class="t" style="left:470.20px;top:188px;font-size:6.57px;line-height:7px;height:7px;color:#3a78de;font-weight:bold;">8</div>
<div class="t" style="left:494.30px;top:190px;font-size:6.14px;line-height:7px;height:7px;color:#4a7fd6;font-weight:normal;">0</div>
<div class="t" style="left:521.30px;top:190px;font-size:6.14px;line-height:7px;height:7px;color:#4a7fd6;font-weight:normal;">0</div>
<div class="r" style="left:537px;top:184px;width:26px;height:15px;background:#f5f5f5;"></div>
<div class="r" style="left:549.0px;top:193.7px;width:2px;height:0.8px;background:#e2e7ee;"></div>
<div class="r" style="left:564px;top:184px;width:26px;height:15px;background:#f5f5f5;"></div>
<div class="r" style="left:576.0px;top:193.7px;width:2px;height:0.8px;background:#e2e7ee;"></div>
<div class="t" style="left:602.30px;top:190px;font-size:6.14px;line-height:7px;height:7px;color:#4a7fd6;font-weight:normal;">0</div>
<div class="r" style="left:618px;top:184px;width:26px;height:15px;background:#ffff6e;"></div>
<div class="r" style="left:621px;top:191.3px;width:2.2px;height:0.9px;background:#3a6fd0;"></div>
<div class="t" style="left:632.20px;top:188px;font-size:6.57px;line-height:7px;height:7px;color:#3a78de;font-weight:bold;">2</div>
<div class="r" style="left:645px;top:184px;width:26px;height:15px;background:#ffcac6;"></div>
<div class="r" style="left:648px;top:191.3px;width:2.2px;height:0.9px;background:#3a6fd0;"></div>
<div class="t" style="left:659.20px;top:188px;font-size:6.57px;line-height:7px;height:7px;color:#3a78de;font-weight:bold;">9</div>
<div class="r" style="left:672px;top:184px;width:26px;height:15px;background:#ffff6e;"></div>
<div class="r" style="left:675px;top:191.3px;width:2.2px;height:0.9px;background:#3a6fd0;"></div>
<div class="t" style="left:686.20px;top:188px;font-size:6.57px;line-height:7px;height:7px;color:#3a78de;font-weight:bold;">2</div>
<div class="t" style="left:710.30px;top:190px;font-size:6.14px;line-height:7px;height:7px;color:#4a7fd6;font-weight:normal;">0</div>
<div class="r" style="left:726px;top:184px;width:26px;height:15px;background:#f5f5f5;"></div>
<div class="r" style="left:738.0px;top:193.7px;width:2px;height:0.8px;background:#e2e7ee;"></div>
<div class="r" style="left:753px;top:184px;width:26px;height:15px;background:#f5f5f5;"></div>
<div class="r" style="left:765.0px;top:193.7px;width:2px;height:0.8px;background:#e2e7ee;"></div>
<div class="t" style="left:791.30px;top:190px;font-size:6.14px;line-height:7px;height:7px;color:#4a7fd6;font-weight:normal;">0</div>
<div class="t" style="left:818.30px;top:190px;font-size:6.14px;line-height:7px;height:7px;color:#4a7fd6;font-weight:normal;">0</div>
<div class="t" style="left:845.30px;top:190px;font-size:6.14px;line-height:7px;height:7px;color:#4a7fd6;font-weight:normal;">0</div>
<div class="t" style="left:872.30px;top:190px;font-size:6.14px;line-height:7px;height:7px;color:#4a7fd6;font-weight:normal;">0</div>
<div class="t" style="left:899.30px;top:190px;font-size:6.14px;line-height:7px;height:7px;color:#4a7fd6;font-weight:normal;">0</div>
<div class="r" style="left:5px;top:200px;width:101px;height:15px;background:#f5f5f5;"></div>
<div class="r" style="left:107px;top:200px;width:3px;height:15px;background:#f5f5f5;"></div>
<div class="t" style="left:7.90px;top:202px;font-size:5.80px;line-height:6px;height:6px;color:#4a4a4a;font-weight:normal;transform:translateY(0px) scaleX(1.0937);transform-origin:0 0;">Luke Oxben</div>
<div class="r" style="left:111px;top:200px;width:26px;height:15px;background:#f5f5f5;"></div>
<div class="t" style="left:122.30px;top:206px;font-size:6.14px;line-height:7px;height:7px;color:#4a7fd6;font-weight:normal;">0</div>
<div class="r" style="left:138px;top:200px;width:25px;height:15px;background:#f5f5f5;"></div>
<div class="t" style="left:148.80px;top:206px;font-size:6.14px;line-height:7px;height:7px;color:#4a7fd6;font-weight:normal;">0</div>
<div class="r" style="left:164px;top:200px;width:26px;height:15px;background:#f5f5f5;"></div>
<div class="r" style="left:176.0px;top:209.7px;width:2px;height:0.8px;background:#e2e7ee;"></div>
<div class="r" style="left:191px;top:200px;width:25px;height:15px;background:#f5f5f5;"></div>
<div class="r" style="left:202.5px;top:209.7px;width:2px;height:0.8px;background:#e2e7ee;"></div>
<div class="r" style="left:217px;top:200px;width:26px;height:15px;background:#c2dffb;"></div>
<div class="r" style="left:220.6px;top:207.2px;width:2.4px;height:0.9px;background:#3a6fd0;"></div>
<div class="r" style="left:231.8px;top:207.3px;width:2.0px;height:0.8px;background:#a9c8f0;"></div>
<div class="r" style="left:244px;top:200px;width:25px;height:15px;background:#c2dffb;"></div>
<div class="r" style="left:247.6px;top:207.2px;width:2.4px;height:0.9px;background:#3a6fd0;"></div>
<div class="r" style="left:258.8px;top:207.3px;width:2.0px;height:0.8px;background:#a9c8f0;"></div>
<div class="r" style="left:270px;top:200px;width:26px;height:15px;background:#c2dffb;"></div>
<div class="r" style="left:273.6px;top:207.2px;width:2.4px;height:0.9px;background:#3a6fd0;"></div>
<div class="r" style="left:284.8px;top:207.3px;width:2.0px;height:0.8px;background:#a9c8f0;"></div>
<div class="r" style="left:297px;top:200px;width:25px;height:15px;background:#c2dffb;"></div>
<div class="r" style="left:300.6px;top:207.2px;width:2.4px;height:0.9px;background:#3a6fd0;"></div>
<div class="r" style="left:311.8px;top:207.3px;width:2.0px;height:0.8px;background:#a9c8f0;"></div>
<div class="r" style="left:323px;top:200px;width:26px;height:15px;background:#c2dffb;"></div>
<div class="r" style="left:326.6px;top:207.2px;width:2.4px;height:0.9px;background:#3a6fd0;"></div>
<div class="r" style="left:337.8px;top:207.3px;width:2.0px;height:0.8px;background:#a9c8f0;"></div>
<div class="r" style="left:350px;top:200px;width:25px;height:15px;background:#f5f5f5;"></div>
<div class="r" style="left:361.5px;top:209.7px;width:2px;height:0.8px;background:#e2e7ee;"></div>
<div class="r" style="left:376px;top:200px;width:25px;height:15px;background:#f5f5f5;"></div>
<div class="r" style="left:387.5px;top:209.7px;width:2px;height:0.8px;background:#e2e7ee;"></div>
<div class="r" style="left:402px;top:200px;width:26px;height:15px;background:#c2dffb;"></div>
<div class="r" style="left:405.6px;top:207.2px;width:2.4px;height:0.9px;background:#3a6fd0;"></div>
<div class="r" style="left:416.8px;top:207.3px;width:2.0px;height:0.8px;background:#a9c8f0;"></div>
<div class="r" style="left:429px;top:200px;width:26px;height:15px;background:#f5f5f5;"></div>
<div class="t" style="left:440.30px;top:206px;font-size:6.14px;line-height:7px;height:7px;color:#4a7fd6;font-weight:normal;">0</div>
<div class="r" style="left:456px;top:200px;width:26px;height:15px;background:#f5f5f5;"></div>
<div class="t" style="left:467.30px;top:206px;font-size:6.14px;line-height:7px;height:7px;color:#4a7fd6;font-weight:normal;">0</div>
<div class="r" style="left:483px;top:200px;width:26px;height:15px;background:#f5f5f5;"></div>
<div class="t" style="left:494.30px;top:206px;font-size:6.14px;line-height:7px;height:7px;color:#4a7fd6;font-weight:normal;">0</div>
<div class="r" style="left:510px;top:200px;width:26px;height:15px;background:#f5f5f5;"></div>
<div class="t" style="left:521.30px;top:206px;font-size:6.14px;line-height:7px;height:7px;color:#4a7fd6;font-weight:normal;">0</div>
<div class="r" style="left:537px;top:200px;width:26px;height:15px;background:#f5f5f5;"></div>
<div class="r" style="left:549.0px;top:209.7px;width:2px;height:0.8px;background:#e2e7ee;"></div>
<div class="r" style="left:564px;top:200px;width:26px;height:15px;background:#f5f5f5;"></div>
<div class="r" style="left:576.0px;top:209.7px;width:2px;height:0.8px;background:#e2e7ee;"></div>
<div class="r" style="left:591px;top:200px;width:26px;height:15px;background:#f5f5f5;"></div>
<div class="t" style="left:602.30px;top:206px;font-size:6.14px;line-height:7px;height:7px;color:#4a7fd6;font-weight:normal;">0</div>
<div class="r" style="left:618px;top:200px;width:26px;height:15px;background:#cbf27a;"></div>
<div class="r" style="left:621px;top:207.3px;width:2.2px;height:0.9px;background:#3a6fd0;"></div>
<div class="t" style="left:632.20px;top:204px;font-size:6.57px;line-height:7px;height:7px;color:#3a78de;font-weight:bold;">2</div>
<div class="r" style="left:645px;top:200px;width:26px;height:15px;background:#ff7a7a;"></div>
<div class="r" style="left:648px;top:207.3px;width:2.2px;height:0.9px;background:#3a6fd0;"></div>
<div class="t" style="left:659.20px;top:204px;font-size:6.57px;line-height:7px;height:7px;color:#3a78de;font-weight:bold;">9</div>
<div class="r" style="left:672px;top:200px;width:26px;height:15px;background:#f5f5f5;"></div>
<div class="t" style="left:683.30px;top:206px;font-size:6.14px;line-height:7px;height:7px;color:#4a7fd6;font-weight:normal;">0</div>
<div class="r" style="left:699px;top:200px;width:26px;height:15px;background:#f5f5f5;"></div>
<div class="t" style="left:710.30px;top:206px;font-size:6.14px;line-height:7px;height:7px;color:#4a7fd6;font-weight:normal;">0</div>
<div class="r" style="left:726px;top:200px;width:26px;height:15px;background:#f5f5f5;"></div>
<div class="r" style="left:738.0px;top:209.7px;width:2px;height:0.8px;background:#e2e7ee;"></div>
<div class="r" style="left:753px;top:200px;width:26px;height:15px;background:#f5f5f5;"></div>
<div class="r" style="left:765.0px;top:209.7px;width:2px;height:0.8px;background:#e2e7ee;"></div>
<div class="r" style="left:780px;top:200px;width:26px;height:15px;background:#f5f5f5;"></div>
<div class="t" style="left:791.30px;top:206px;font-size:6.14px;line-height:7px;height:7px;color:#4a7fd6;font-weight:normal;">0</div>
<div class="r" style="left:807px;top:200px;width:26px;height:15px;background:#f5f5f5;"></div>
<div class="t" style="left:818.30px;top:206px;font-size:6.14px;line-height:7px;height:7px;color:#4a7fd6;font-weight:normal;">0</div>
<div class="r" style="left:834px;top:200px;width:26px;height:15px;background:#f5f5f5;"></div>
<div class="t" style="left:845.30px;top:206px;font-size:6.14px;line-height:7px;height:7px;color:#4a7fd6;font-weight:normal;">0</div>
<div class="r" style="left:861px;top:200px;width:26px;height:15px;background:#f5f5f5;"></div>
<div class="t" style="left:872.30px;top:206px;font-size:6.14px;line-height:7px;height:7px;color:#4a7fd6;font-weight:normal;">0</div>
<div class="r" style="left:888px;top:200px;width:26px;height:15px;background:#f5f5f5;"></div>
<div class="t" style="left:899.30px;top:206px;font-size:6.14px;line-height:7px;height:7px;color:#4a7fd6;font-weight:normal;">0</div>
<div class="t" style="left:6.10px;top:219px;font-size:7.25px;line-height:9px;height:9px;color:#333;font-weight:bold;transform:translateY(0px) scaleX(0.8426);transform-origin:0 0;">INFRASTRUCTURE TEAM</div>
<div class="t" style="left:7.90px;top:234px;font-size:5.80px;line-height:6px;height:6px;color:#4a4a4a;font-weight:normal;transform:translateY(0px) scaleX(1.1254);transform-origin:0 0;">Instructor</div>
<div class="t" style="left:122.30px;top:238px;font-size:6.14px;line-height:7px;height:7px;color:#4a7fd6;font-weight:normal;">0</div>
<div class="t" style="left:148.80px;top:238px;font-size:6.14px;line-height:7px;height:7px;color:#4a7fd6;font-weight:normal;">0</div>
<div class="r" style="left:164px;top:232px;width:26px;height:15px;background:#f5f5f5;"></div>
<div class="r" style="left:176.0px;top:241.7px;width:2px;height:0.8px;background:#e2e7ee;"></div>
<div class="r" style="left:191px;top:232px;width:25px;height:15px;background:#f5f5f5;"></div>
<div class="r" style="left:202.5px;top:241.7px;width:2px;height:0.8px;background:#e2e7ee;"></div>
<div class="t" style="left:228.30px;top:238px;font-size:6.14px;line-height:7px;height:7px;color:#4a7fd6;font-weight:normal;">0</div>
<div class="t" style="left:254.80px;top:238px;font-size:6.14px;line-height:7px;height:7px;color:#4a7fd6;font-weight:normal;">0</div>
<div class="t" style="left:281.30px;top:238px;font-size:6.14px;line-height:7px;height:7px;color:#4a7fd6;font-weight:normal;">0</div>
<div class="t" style="left:307.80px;top:238px;font-size:6.14px;line-height:7px;height:7px;color:#4a7fd6;font-weight:normal;">0</div>
<div class="t" style="left:334.30px;top:238px;font-size:6.14px;line-height:7px;height:7px;color:#4a7fd6;font-weight:normal;">0</div>
<div class="r" style="left:350px;top:232px;width:25px;height:15px;background:#f5f5f5;"></div>
<div class="r" style="left:361.5px;top:241.7px;width:2px;height:0.8px;background:#e2e7ee;"></div>
<div class="r" style="left:376px;top:232px;width:25px;height:15px;background:#f5f5f5;"></div>
<div class="r" style="left:387.5px;top:241.7px;width:2px;height:0.8px;background:#e2e7ee;"></div>
<div class="t" style="left:413.30px;top:238px;font-size:6.14px;line-height:7px;height:7px;color:#4a7fd6;font-weight:normal;">0</div>
<div class="t" style="left:440.30px;top:238px;font-size:6.14px;line-height:7px;height:7px;color:#4a7fd6;font-weight:normal;">0</div>
<div class="t" style="left:467.30px;top:238px;font-size:6.14px;line-height:7px;height:7px;color:#4a7fd6;font-weight:normal;">0</div>
<div class="t" style="left:494.30px;top:238px;font-size:6.14px;line-height:7px;height:7px;color:#4a7fd6;font-weight:normal;">0</div>
<div class="t" style="left:521.30px;top:238px;font-size:6.14px;line-height:7px;height:7px;color:#4a7fd6;font-weight:normal;">0</div>
<div class="r" style="left:537px;top:232px;width:26px;height:15px;background:#f5f5f5;"></div>
<div class="r" style="left:549.0px;top:241.7px;width:2px;height:0.8px;background:#e2e7ee;"></div>
<div class="r" style="left:564px;top:232px;width:26px;height:15px;background:#f5f5f5;"></div>
<div class="r" style="left:576.0px;top:241.7px;width:2px;height:0.8px;background:#e2e7ee;"></div>
<div class="t" style="left:602.30px;top:238px;font-size:6.14px;line-height:7px;height:7px;color:#4a7fd6;font-weight:normal;">0</div>
<div class="t" style="left:629.30px;top:238px;font-size:6.14px;line-height:7px;height:7px;color:#4a7fd6;font-weight:normal;">0</div>
<div class="t" style="left:656.30px;top:238px;font-size:6.14px;line-height:7px;height:7px;color:#4a7fd6;font-weight:normal;">0</div>
<div class="t" style="left:683.30px;top:238px;font-size:6.14px;line-height:7px;height:7px;color:#4a7fd6;font-weight:normal;">0</div>
<div class="t" style="left:710.30px;top:238px;font-size:6.14px;line-height:7px;height:7px;color:#4a7fd6;font-weight:normal;">0</div>
<div class="r" style="left:726px;top:232px;width:26px;height:15px;background:#f5f5f5;"></div>
<div class="r" style="left:738.0px;top:241.7px;width:2px;height:0.8px;background:#e2e7ee;"></div>
<div class="r" style="left:753px;top:232px;width:26px;height:15px;background:#f5f5f5;"></div>
<div class="r" style="left:765.0px;top:241.7px;width:2px;height:0.8px;background:#e2e7ee;"></div>
<div class="t" style="left:791.30px;top:238px;font-size:6.14px;line-height:7px;height:7px;color:#4a7fd6;font-weight:normal;">0</div>
<div class="t" style="left:818.30px;top:238px;font-size:6.14px;line-height:7px;height:7px;color:#4a7fd6;font-weight:normal;">0</div>
<div class="t" style="left:845.30px;top:238px;font-size:6.14px;line-height:7px;height:7px;color:#4a7fd6;font-weight:normal;">0</div>
<div class="t" style="left:872.30px;top:238px;font-size:6.14px;line-height:7px;height:7px;color:#4a7fd6;font-weight:normal;">0</div>
<div class="t" style="left:899.30px;top:238px;font-size:6.14px;line-height:7px;height:7px;color:#4a7fd6;font-weight:normal;">0</div>
<div class="r" style="left:5px;top:248px;width:101px;height:15px;background:#f5f5f5;"></div>
<div class="r" style="left:107px;top:248px;width:3px;height:15px;background:#f5f5f5;"></div>
<div class="t" style="left:7.90px;top:250px;font-size:5.80px;line-height:6px;height:6px;color:#4a4a4a;font-weight:normal;transform:translateY(0px) scaleX(1.1110);transform-origin:0 0;">Amy Kartel</div>
<div class="r" style="left:111px;top:248px;width:26px;height:15px;background:#f5f5f5;"></div>
<div class="t" style="left:122.30px;top:254px;font-size:6.14px;line-height:7px;height:7px;color:#4a7fd6;font-weight:normal;">0</div>
<div class="r" style="left:138px;top:248px;width:25px;height:15px;background:#f5f5f5;"></div>
<div class="t" style="left:148.80px;top:254px;font-size:6.14px;line-height:7px;height:7px;color:#4a7fd6;font-weight:normal;">0</div>
<div class="r" style="left:164px;top:248px;width:26px;height:15px;background:#f5f5f5;"></div>
<div class="r" style="left:176.0px;top:257.7px;width:2px;height:0.8px;background:#e2e7ee;"></div>
<div class="r" style="left:191px;top:248px;width:25px;height:15px;background:#f5f5f5;"></div>
<div class="r" style="left:202.5px;top:257.7px;width:2px;height:0.8px;background:#e2e7ee;"></div>
<div class="r" style="left:217px;top:248px;width:26px;height:15px;background:#ffff6e;"></div>
<div class="t" style="left:217.30px;top:252px;font-size:6.81px;line-height:7px;height:7px;color:#3f78d6;font-weight:normal;transform:translateY(0px) scaleX(0.9137);transform-origin:0 0;">TA</div>
<div class="t" style="left:229.00px;top:252px;font-size:6.81px;line-height:7px;height:7px;color:#3a78de;font-weight:bold;transform:translateY(0px) scaleX(0.8866);transform-origin:0 0;">1.6</div>
<div class="r" style="left:244px;top:248px;width:25px;height:15px;background:#ffff6e;"></div>
<div class="t" style="left:244.30px;top:252px;font-size:6.81px;line-height:7px;height:7px;color:#3f78d6;font-weight:normal;transform:translateY(0px) scaleX(0.9137);transform-origin:0 0;">TA</div>
<div class="t" style="left:256.00px;top:252px;font-size:6.81px;line-height:7px;height:7px;color:#3a78de;font-weight:bold;transform:translateY(0px) scaleX(0.8866);transform-origin:0 0;">1.6</div>
<div class="r" style="left:270px;top:248px;width:26px;height:15px;background:#ffff6e;"></div>
<div class="t" style="left:270.30px;top:252px;font-size:6.81px;line-height:7px;height:7px;color:#3f78d6;font-weight:normal;transform:translateY(0px) scaleX(0.9137);transform-origin:0 0;">TA</div>
<div class="t" style="left:282.00px;top:252px;font-size:6.81px;line-height:7px;height:7px;color:#3a78de;font-weight:bold;transform:translateY(0px) scaleX(0.8866);transform-origin:0 0;">1.6</div>
<div class="r" style="left:297px;top:248px;width:25px;height:15px;background:#ffff6e;"></div>
<div class="t" style="left:297.30px;top:252px;font-size:6.81px;line-height:7px;height:7px;color:#3f78d6;font-weight:normal;transform:translateY(0px) scaleX(0.9137);transform-origin:0 0;">TA</div>
<div class="t" style="left:309.00px;top:252px;font-size:6.81px;line-height:7px;height:7px;color:#3a78de;font-weight:bold;transform:translateY(0px) scaleX(0.8866);transform-origin:0 0;">1.6</div>
<div class="r" style="left:323px;top:248px;width:26px;height:15px;background:#ffff6e;"></div>
<div class="t" style="left:323.30px;top:252px;font-size:6.81px;line-height:7px;height:7px;color:#3f78d6;font-weight:normal;transform:translateY(0px) scaleX(0.9137);transform-origin:0 0;">TA</div>
<div class="t" style="left:335.00px;top:252px;font-size:6.81px;line-height:7px;height:7px;color:#3a78de;font-weight:bold;transform:translateY(0px) scaleX(0.8866);transform-origin:0 0;">1.6</div>
<div class="r" style="left:350px;top:248px;width:25px;height:15px;background:#f5f5f5;"></div>
<div class="r" style="left:361.5px;top:257.7px;width:2px;height:0.8px;background:#e2e7ee;"></div>
<div class="r" style="left:376px;top:248px;width:25px;height:15px;background:#f5f5f5;"></div>
<div class="r" style="left:387.5px;top:257.7px;width:2px;height:0.8px;background:#e2e7ee;"></div>
<div class="r" style="left:402px;top:248px;width:26px;height:15px;background:#c2dffb;"></div>
<div class="r" style="left:405.6px;top:255.2px;width:2.4px;height:0.9px;background:#3a6fd0;"></div>
<div class="r" style="left:416.8px;top:255.3px;width:2.0px;height:0.8px;background:#a9c8f0;"></div>
<div class="r" style="left:429px;top:248px;width:26px;height:15px;background:#f5f5f5;"></div>
<div class="t" style="left:440.30px;top:254px;font-size:6.14px;line-height:7px;height:7px;color:#4a7fd6;font-weight:normal;">0</div>
<div class="r" style="left:456px;top:248px;width:26px;height:15px;background:#f5f5f5;"></div>
<div class="t" style="left:467.30px;top:254px;font-size:6.14px;line-height:7px;height:7px;color:#4a7fd6;font-weight:normal;">0</div>
<div class="r" style="left:483px;top:248px;width:26px;height:15px;background:#f5f5f5;"></div>
<div class="t" style="left:494.30px;top:254px;font-size:6.14px;line-height:7px;height:7px;color:#4a7fd6;font-weight:normal;">0</div>
<div class="r" style="left:510px;top:248px;width:26px;height:15px;background:#f5f5f5;"></div>
<div class="t" style="left:521.30px;top:254px;font-size:6.14px;line-height:7px;height:7px;color:#4a7fd6;font-weight:normal;">0</div>
<div class="r" style="left:537px;top:248px;width:26px;height:15px;background:#f5f5f5;"></div>
<div class="r" style="left:549.0px;top:257.7px;width:2px;height:0.8px;background:#e2e7ee;"></div>
<div class="r" style="left:564px;top:248px;width:26px;height:15px;background:#f5f5f5;"></div>
<div class="r" style="left:576.0px;top:257.7px;width:2px;height:0.8px;background:#e2e7ee;"></div>
<div class="r" style="left:591px;top:248px;width:26px;height:15px;background:#f5f5f5;"></div>
<div class="t" style="left:602.30px;top:254px;font-size:6.14px;line-height:7px;height:7px;color:#4a7fd6;font-weight:normal;">0</div>
<div class="r" style="left:618px;top:248px;width:26px;height:15px;background:#f5f5f5;"></div>
<div class="t" style="left:629.30px;top:254px;font-size:6.14px;line-height:7px;height:7px;color:#4a7fd6;font-weight:normal;">0</div>
<div class="r" style="left:645px;top:248px;width:26px;height:15px;background:#f5f5f5;"></div>
<div class="t" style="left:656.30px;top:254px;font-size:6.14px;line-height:7px;height:7px;color:#4a7fd6;font-weight:normal;">0</div>
<div class="r" style="left:672px;top:248px;width:26px;height:15px;background:#f5f5f5;"></div>
<div class="t" style="left:683.30px;top:254px;font-size:6.14px;line-height:7px;height:7px;color:#4a7fd6;font-weight:normal;">0</div>
<div class="r" style="left:699px;top:248px;width:26px;height:15px;background:#f5f5f5;"></div>
<div class="t" style="left:710.30px;top:254px;font-size:6.14px;line-height:7px;height:7px;color:#4a7fd6;font-weight:normal;">0</div>
<div class="r" style="left:726px;top:248px;width:26px;height:15px;background:#f5f5f5;"></div>
<div class="r" style="left:738.0px;top:257.7px;width:2px;height:0.8px;background:#e2e7ee;"></div>
<div class="r" style="left:753px;top:248px;width:26px;height:15px;background:#f5f5f5;"></div>
<div class="r" style="left:765.0px;top:257.7px;width:2px;height:0.8px;background:#e2e7ee;"></div>
<div class="r" style="left:780px;top:248px;width:26px;height:15px;background:#f5f5f5;"></div>
<div class="t" style="left:791.30px;top:254px;font-size:6.14px;line-height:7px;height:7px;color:#4a7fd6;font-weight:normal;">0</div>
<div class="r" style="left:807px;top:248px;width:26px;height:15px;background:#f5f5f5;"></div>
<div class="t" style="left:818.30px;top:254px;font-size:6.14px;line-height:7px;height:7px;color:#4a7fd6;font-weight:normal;">0</div>
<div class="r" style="left:834px;top:248px;width:26px;height:15px;background:#f5f5f5;"></div>
<div class="t" style="left:845.30px;top:254px;font-size:6.14px;line-height:7px;height:7px;color:#4a7fd6;font-weight:normal;">0</div>
<div class="r" style="left:861px;top:248px;width:26px;height:15px;background:#f5f5f5;"></div>
<div class="t" style="left:872.30px;top:254px;font-size:6.14px;line-height:7px;height:7px;color:#4a7fd6;font-weight:normal;">0</div>
<div class="r" style="left:888px;top:248px;width:26px;height:15px;background:#f5f5f5;"></div>
<div class="t" style="left:899.30px;top:254px;font-size:6.14px;line-height:7px;height:7px;color:#4a7fd6;font-weight:normal;">0</div>
<div class="t" style="left:7.90px;top:266px;font-size:5.80px;line-height:6px;height:6px;color:#4a4a4a;font-weight:normal;transform:translateY(0px) scaleX(1.0528);transform-origin:0 0;">John Dallas</div>
<div class="t" style="left:122.30px;top:270px;font-size:6.14px;line-height:7px;height:7px;color:#4a7fd6;font-weight:normal;">0</div>
<div class="t" style="left:148.80px;top:270px;font-size:6.14px;line-height:7px;height:7px;color:#4a7fd6;font-weight:normal;">0</div>
<div class="r" style="left:164px;top:264px;width:26px;height:15px;background:#f5f5f5;"></div>
<div class="r" style="left:176.0px;top:273.7px;width:2px;height:0.8px;background:#e2e7ee;"></div>
<div class="r" style="left:191px;top:264px;width:25px;height:15px;background:#f5f5f5;"></div>
<div class="r" style="left:202.5px;top:273.7px;width:2px;height:0.8px;background:#e2e7ee;"></div>
<div class="r" style="left:217px;top:264px;width:26px;height:15px;background:#c2dffb;"></div>
<div class="r" style="left:220.6px;top:271.2px;width:2.4px;height:0.9px;background:#3a6fd0;"></div>
<div class="r" style="left:231.8px;top:271.3px;width:2.0px;height:0.8px;background:#a9c8f0;"></div>
<div class="r" style="left:244px;top:264px;width:25px;height:15px;background:#c2dffb;"></div>
<div class="r" style="left:247.6px;top:271.2px;width:2.4px;height:0.9px;background:#3a6fd0;"></div>
<div class="r" style="left:258.8px;top:271.3px;width:2.0px;height:0.8px;background:#a9c8f0;"></div>
<div class="r" style="left:270px;top:264px;width:26px;height:15px;background:#c2dffb;"></div>
<div class="r" style="left:273.6px;top:271.2px;width:2.4px;height:0.9px;background:#3a6fd0;"></div>
<div class="r" style="left:284.8px;top:271.3px;width:2.0px;height:0.8px;background:#a9c8f0;"></div>
<div class="r" style="left:297px;top:264px;width:25px;height:15px;background:#c2dffb;"></div>
<div class="r" style="left:300.6px;top:271.2px;width:2.4px;height:0.9px;background:#3a6fd0;"></div>
<div class="r" style="left:311.8px;top:271.3px;width:2.0px;height:0.8px;background:#a9c8f0;"></div>
<div class="r" style="left:323px;top:264px;width:26px;height:15px;background:#c2dffb;"></div>
<div class="r" style="left:326.6px;top:271.2px;width:2.4px;height:0.9px;background:#3a6fd0;"></div>
<div class="r" style="left:337.8px;top:271.3px;width:2.0px;height:0.8px;background:#a9c8f0;"></div>
<div class="r" style="left:350px;top:264px;width:25px;height:15px;background:#f5f5f5;"></div>
<div class="r" style="left:361.5px;top:273.7px;width:2px;height:0.8px;background:#e2e7ee;"></div>
<div class="r" style="left:376px;top:264px;width:25px;height:15px;background:#f5f5f5;"></div>
<div class="r" style="left:387.5px;top:273.7px;width:2px;height:0.8px;background:#e2e7ee;"></div>
<div class="r" style="left:402px;top:264px;width:26px;height:15px;background:#c2dffb;"></div>
<div class="r" style="left:405.6px;top:271.2px;width:2.4px;height:0.9px;background:#3a6fd0;"></div>
<div class="r" style="left:416.8px;top:271.3px;width:2.0px;height:0.8px;background:#a9c8f0;"></div>
<div class="r" style="left:429px;top:264px;width:26px;height:15px;background:#c2dffb;"></div>
<div class="r" style="left:432.6px;top:271.2px;width:2.4px;height:0.9px;background:#3a6fd0;"></div>
<div class="r" style="left:443.8px;top:271.3px;width:2.0px;height:0.8px;background:#a9c8f0;"></div>
<div class="r" style="left:456px;top:264px;width:26px;height:15px;background:#c2dffb;"></div>
<div class="r" style="left:459.6px;top:271.2px;width:2.4px;height:0.9px;background:#3a6fd0;"></div>
<div class="r" style="left:470.8px;top:271.3px;width:2.0px;height:0.8px;background:#a9c8f0;"></div>
<div class="r" style="left:483px;top:264px;width:26px;height:15px;background:#c2dffb;"></div>
<div class="r" style="left:486.6px;top:271.2px;width:2.4px;height:0.9px;background:#3a6fd0;"></div>
<div class="r" style="left:497.8px;top:271.3px;width:2.0px;height:0.8px;background:#a9c8f0;"></div>
<div class="t" style="left:521.30px;top:270px;font-size:6.14px;line-height:7px;height:7px;color:#4a7fd6;font-weight:normal;">0</div>
<div class="r" style="left:537px;top:264px;width:26px;height:15px;background:#f5f5f5;"></div>
<div class="r" style="left:549.0px;top:273.7px;width:2px;height:0.8px;background:#e2e7ee;"></div>
<div class="r" style="left:564px;top:264px;width:26px;height:15px;background:#f5f5f5;"></div>
<div class="r" style="left:576.0px;top:273.7px;width:2px;height:0.8px;background:#e2e7ee;"></div>
<div class="t" style="left:602.30px;top:270px;font-size:6.14px;line-height:7px;height:7px;color:#4a7fd6;font-weight:normal;">0</div>
<div class="r" style="left:618px;top:264px;width:26px;height:15px;background:#9cf794;"></div>
<div class="r" style="left:621px;top:271.3px;width:2.2px;height:0.9px;background:#3a6fd0;"></div>
<div class="t" style="left:632.20px;top:268px;font-size:6.57px;line-height:7px;height:7px;color:#3a78de;font-weight:bold;">8</div>
<div class="r" style="left:645px;top:264px;width:26px;height:15px;background:#9cf794;"></div>
<div class="r" style="left:648px;top:271.3px;width:2.2px;height:0.9px;background:#3a6fd0;"></div>
<div class="t" style="left:659.20px;top:268px;font-size:6.57px;line-height:7px;height:7px;color:#3a78de;font-weight:bold;">8</div>
<div class="r" style="left:672px;top:264px;width:26px;height:15px;background:#9cf794;"></div>
<div class="r" style="left:675px;top:271.3px;width:2.2px;height:0.9px;background:#3a6fd0;"></div>
<div class="t" style="left:686.20px;top:268px;font-size:6.57px;line-height:7px;height:7px;color:#3a78de;font-weight:bold;">8</div>
<div class="r" style="left:699px;top:264px;width:26px;height:15px;background:#9cf794;"></div>
<div class="r" style="left:702px;top:271.3px;width:2.2px;height:0.9px;background:#3a6fd0;"></div>
<div class="t" style="left:713.20px;top:268px;font-size:6.57px;line-height:7px;height:7px;color:#3a78de;font-weight:bold;">8</div>
<div class="r" style="left:726px;top:264px;width:26px;height:15px;background:#f5f5f5;"></div>
<div class="r" style="left:738.0px;top:273.7px;width:2px;height:0.8px;background:#e2e7ee;"></div>
<div class="r" style="left:753px;top:264px;width:26px;height:15px;background:#f5f5f5;"></div>
<div class="r" style="left:765.0px;top:273.7px;width:2px;height:0.8px;background:#e2e7ee;"></div>
<div class="r" style="left:780px;top:264px;width:26px;height:15px;background:#c2dffb;"></div>
<div class="r" style="left:783.6px;top:271.2px;width:2.4px;height:0.9px;background:#3a6fd0;"></div>
<div class="r" style="left:794.8px;top:271.3px;width:2.0px;height:0.8px;background:#a9c8f0;"></div>
<div class="r" style="left:807px;top:264px;width:26px;height:15px;background:#c2dffb;"></div>
<div class="r" style="left:810.6px;top:271.2px;width:2.4px;height:0.9px;background:#3a6fd0;"></div>
<div class="r" style="left:821.8px;top:271.3px;width:2.0px;height:0.8px;background:#a9c8f0;"></div>
<div class="r" style="left:834px;top:264px;width:26px;height:15px;background:#c2dffb;"></div>
<div class="r" style="left:837.6px;top:271.2px;width:2.4px;height:0.9px;background:#3a6fd0;"></div>
<div class="r" style="left:848.8px;top:271.3px;width:2.0px;height:0.8px;background:#a9c8f0;"></div>
<div class="r" style="left:861px;top:264px;width:26px;height:15px;background:#c2dffb;"></div>
<div class="r" style="left:864.6px;top:271.2px;width:2.4px;height:0.9px;background:#3a6fd0;"></div>
<div class="r" style="left:875.8px;top:271.3px;width:2.0px;height:0.8px;background:#a9c8f0;"></div>
<div class="r" style="left:888px;top:264px;width:26px;height:15px;background:#c2dffb;"></div>
<div class="r" style="left:891.6px;top:271.2px;width:2.4px;height:0.9px;background:#3a6fd0;"></div>
<div class="r" style="left:902.8px;top:271.3px;width:2.0px;height:0.8px;background:#a9c8f0;"></div>
<div class="r" style="left:5px;top:280px;width:905px;height:15px;background:#f5f5f5;"></div>
<div class="t" style="left:6.10px;top:283px;font-size:7.25px;line-height:9px;height:9px;color:#333;font-weight:bold;transform:translateY(0px) scaleX(0.8255);transform-origin:0 0;">JAVA DEVELOPERS GROUP</div>
<div class="t" style="left:7.90px;top:298px;font-size:5.80px;line-height:6px;height:6px;color:#4a4a4a;font-weight:normal;transform:translateY(0px) scaleX(1.1092);transform-origin:0 0;">Tom Harvald</div>
<div class="t" style="left:122.30px;top:302px;font-size:6.14px;line-height:7px;height:7px;color:#4a7fd6;font-weight:normal;">0</div>
<div class="t" style="left:148.80px;top:302px;font-size:6.14px;line-height:7px;height:7px;color:#4a7fd6;font-weight:normal;">0</div>
<div class="r" style="left:164px;top:296px;width:26px;height:15px;background:#f5f5f5;"></div>
<div class="r" style="left:176.0px;top:304.8px;width:2px;height:0.8px;background:#b0c6ec;"></div>
<div class="r" style="left:191px;top:296px;width:25px;height:15px;background:#f5f5f5;"></div>
<div class="r" style="left:202.5px;top:304.8px;width:2px;height:0.8px;background:#b0c6ec;"></div>
<div class="r" style="left:217px;top:296px;width:26px;height:15px;background:#9cf794;"></div>
<div class="t" style="left:218.00px;top:300px;font-size:6.96px;line-height:7px;height:7px;color:#3f78d6;font-weight:normal;transform:translateY(0px) scaleX(0.7906);transform-origin:0 0;">TRP</div>
<div class="t" style="left:233.50px;top:300px;font-size:6.96px;line-height:7px;height:7px;color:#3a78de;font-weight:bold;">8</div>
<div class="r" style="left:244px;top:296px;width:25px;height:15px;background:#9cf794;"></div>
<div class="t" style="left:245.00px;top:300px;font-size:6.96px;line-height:7px;height:7px;color:#3f78d6;font-weight:normal;transform:translateY(0px) scaleX(0.7906);transform-origin:0 0;">TRP</div>
<div class="t" style="left:260.50px;top:300px;font-size:6.96px;line-height:7px;height:7px;color:#3a78de;font-weight:bold;">8</div>
<div class="t" style="left:281.30px;top:302px;font-size:6.14px;line-height:7px;height:7px;color:#4a7fd6;font-weight:normal;">0</div>
<div class="t" style="left:307.80px;top:302px;font-size:6.14px;line-height:7px;height:7px;color:#4a7fd6;font-weight:normal;">0</div>
<div class="t" style="left:334.30px;top:302px;font-size:6.14px;line-height:7px;height:7px;color:#4a7fd6;font-weight:normal;">0</div>
<div class="r" style="left:350px;top:296px;width:25px;height:15px;background:#f5f5f5;"></div>
<div class="r" style="left:361.5px;top:304.8px;width:2px;height:0.8px;background:#b0c6ec;"></div>
<div class="r" style="left:376px;top:296px;width:25px;height:15px;background:#f5f5f5;"></div>
<div class="r" style="left:387.5px;top:304.8px;width:2px;height:0.8px;background:#b0c6ec;"></div>
<div class="r" style="left:402px;top:296px;width:26px;height:15px;background:#c2dffb;"></div>
<div class="r" style="left:405.6px;top:303.2px;width:2.4px;height:0.9px;background:#3a6fd0;"></div>
<div class="r" style="left:416.8px;top:303.3px;width:2.0px;height:0.8px;background:#a9c8f0;"></div>
<div class="t" style="left:440.30px;top:302px;font-size:6.14px;line-height:7px;height:7px;color:#4a7fd6;font-weight:normal;">0</div>
<div class="t" style="left:467.30px;top:302px;font-size:6.14px;line-height:7px;height:7px;color:#4a7fd6;font-weight:normal;">0</div>
<div class="t" style="left:494.30px;top:302px;font-size:6.14px;line-height:7px;height:7px;color:#4a7fd6;font-weight:normal;">0</div>
<div class="t" style="left:521.30px;top:302px;font-size:6.14px;line-height:7px;height:7px;color:#4a7fd6;font-weight:normal;">0</div>
<div class="r" style="left:537px;top:296px;width:26px;height:15px;background:#f5f5f5;"></div>
<div class="r" style="left:549.0px;top:304.8px;width:2px;height:0.8px;background:#b0c6ec;"></div>
<div class="r" style="left:564px;top:296px;width:26px;height:15px;background:#f5f5f5;"></div>
<div class="r" style="left:576.0px;top:304.8px;width:2px;height:0.8px;background:#b0c6ec;"></div>
<div class="t" style="left:602.30px;top:302px;font-size:6.14px;line-height:7px;height:7px;color:#4a7fd6;font-weight:normal;">0</div>
<div class="r" style="left:618px;top:296px;width:26px;height:15px;background:#9cf794;"></div>
<div class="r" style="left:621px;top:303.3px;width:2.2px;height:0.9px;background:#3a6fd0;"></div>
<div class="t" style="left:632.20px;top:300px;font-size:6.57px;line-height:7px;height:7px;color:#3a78de;font-weight:bold;">8</div>
<div class="r" style="left:645px;top:296px;width:26px;height:15px;background:#9cf794;"></div>
<div class="r" style="left:648px;top:303.3px;width:2.2px;height:0.9px;background:#3a6fd0;"></div>
<div class="t" style="left:659.20px;top:300px;font-size:6.57px;line-height:7px;height:7px;color:#3a78de;font-weight:bold;">8</div>
<div class="r" style="left:672px;top:296px;width:26px;height:15px;background:#ffcac6;"></div>
<div class="r" style="left:675px;top:303.3px;width:2.2px;height:0.9px;background:#3a6fd0;"></div>
<div class="t" style="left:686.20px;top:300px;font-size:6.57px;line-height:7px;height:7px;color:#3a78de;font-weight:bold;">9</div>
<div class="t" style="left:710.30px;top:302px;font-size:6.14px;line-height:7px;height:7px;color:#4a7fd6;font-weight:normal;">0</div>
<div class="r" style="left:726px;top:296px;width:26px;height:15px;background:#f5f5f5;"></div>
<div class="r" style="left:738.0px;top:304.8px;width:2px;height:0.8px;background:#b0c6ec;"></div>
<div class="r" style="left:753px;top:296px;width:26px;height:15px;background:#f5f5f5;"></div>
<div class="r" style="left:765.0px;top:304.8px;width:2px;height:0.8px;background:#b0c6ec;"></div>
<div class="t" style="left:791.30px;top:302px;font-size:6.14px;line-height:7px;height:7px;color:#4a7fd6;font-weight:normal;">0</div>
<div class="t" style="left:818.30px;top:302px;font-size:6.14px;line-height:7px;height:7px;color:#4a7fd6;font-weight:normal;">0</div>
<div class="t" style="left:845.30px;top:302px;font-size:6.14px;line-height:7px;height:7px;color:#4a7fd6;font-weight:normal;">0</div>
<div class="t" style="left:872.30px;top:302px;font-size:6.14px;line-height:7px;height:7px;color:#4a7fd6;font-weight:normal;">0</div>
<div class="t" style="left:899.30px;top:302px;font-size:6.14px;line-height:7px;height:7px;color:#4a7fd6;font-weight:normal;">0</div>
<div class="r" style="left:5px;top:312px;width:101px;height:15px;background:#f5f5f5;"></div>
<div class="r" style="left:107px;top:312px;width:3px;height:15px;background:#f5f5f5;"></div>
<div class="t" style="left:7.90px;top:314px;font-size:5.80px;line-height:6px;height:6px;color:#4a4a4a;font-weight:normal;transform:translateY(0px) scaleX(1.1037);transform-origin:0 0;">Bob Robinson</div>
<div class="r" style="left:111px;top:312px;width:26px;height:15px;background:#f5f5f5;"></div>
<div class="t" style="left:122.30px;top:318px;font-size:6.14px;line-height:7px;height:7px;color:#4a7fd6;font-weight:normal;">0</div>
<div class="r" style="left:138px;top:312px;width:25px;height:15px;background:#f5f5f5;"></div>
<div class="t" style="left:148.80px;top:318px;font-size:6.14px;line-height:7px;height:7px;color:#4a7fd6;font-weight:normal;">0</div>
<div class="r" style="left:164px;top:312px;width:26px;height:15px;background:#f5f5f5;"></div>
<div class="r" style="left:176.0px;top:320.8px;width:2px;height:0.8px;background:#b0c6ec;"></div>
<div class="r" style="left:191px;top:312px;width:25px;height:15px;background:#f5f5f5;"></div>
<div class="r" style="left:202.5px;top:320.8px;width:2px;height:0.8px;background:#b0c6ec;"></div>
<div class="r" style="left:217px;top:312px;width:26px;height:15px;background:#f5f5f5;"></div>
<div class="t" style="left:228.30px;top:318px;font-size:6.14px;line-height:7px;height:7px;color:#4a7fd6;font-weight:normal;">0</div>
<div class="r" style="left:244px;top:312px;width:25px;height:15px;background:#f5f5f5;"></div>
<div class="t" style="left:254.80px;top:318px;font-size:6.14px;line-height:7px;height:7px;color:#4a7fd6;font-weight:normal;">0</div>
<div class="r" style="left:270px;top:312px;width:26px;height:15px;background:#ffff6e;"></div>
<div class="t" style="left:271.00px;top:316px;font-size:6.96px;line-height:7px;height:7px;color:#4a7fcf;font-weight:normal;transform:translateY(0px) scaleX(0.7691);transform-origin:0 0;">TRC</div>
<div class="t" style="left:286.30px;top:316px;font-size:6.96px;line-height:7px;height:7px;color:#3a78de;font-weight:bold;">2</div>
<div class="r" style="left:297px;top:312px;width:25px;height:15px;background:#c2dffb;"></div>
<div class="r" style="left:300.6px;top:319.2px;width:2.4px;height:0.9px;background:#3a6fd0;"></div>
<div class="r" style="left:311.8px;top:319.3px;width:2.0px;height:0.8px;background:#a9c8f0;"></div>
<div class="r" style="left:323px;top:312px;width:26px;height:15px;background:#c2dffb;"></div>
<div class="r" style="left:326.6px;top:319.2px;width:2.4px;height:0.9px;background:#3a6fd0;"></div>
<div class="r" style="left:337.8px;top:319.3px;width:2.0px;height:0.8px;background:#a9c8f0;"></div>
<div class="r" style="left:350px;top:312px;width:25px;height:15px;background:#f5f5f5;"></div>
<div class="r" style="left:361.5px;top:320.8px;width:2px;height:0.8px;background:#b0c6ec;"></div>
<div class="r" style="left:376px;top:312px;width:25px;height:15px;background:#f5f5f5;"></div>
<div class="r" style="left:387.5px;top:320.8px;width:2px;height:0.8px;background:#b0c6ec;"></div>
<div class="r" style="left:402px;top:312px;width:26px;height:15px;background:#c2dffb;"></div>
<div class="r" style="left:405.6px;top:319.2px;width:2.4px;height:0.9px;background:#3a6fd0;"></div>
<div class="r" style="left:416.8px;top:319.3px;width:2.0px;height:0.8px;background:#a9c8f0;"></div>
<div class="r" style="left:429px;top:312px;width:26px;height:15px;background:#f5f5f5;"></div>
<div class="t" style="left:440.30px;top:318px;font-size:6.14px;line-height:7px;height:7px;color:#4a7fd6;font-weight:normal;">0</div>
<div class="r" style="left:456px;top:312px;width:26px;height:15px;background:#f5f5f5;"></div>
<div class="t" style="left:467.30px;top:318px;font-size:6.14px;line-height:7px;height:7px;color:#4a7fd6;font-weight:normal;">0</div>
<div class="r" style="left:483px;top:312px;width:26px;height:15px;background:#f5f5f5;"></div>
<div class="t" style="left:494.30px;top:318px;font-size:6.14px;line-height:7px;height:7px;color:#4a7fd6;font-weight:normal;">0</div>
<div class="r" style="left:510px;top:312px;width:26px;height:15px;background:#f5f5f5;"></div>
<div class="t" style="left:521.30px;top:318px;font-size:6.14px;line-height:7px;height:7px;color:#4a7fd6;font-weight:normal;">0</div>
<div class="r" style="left:537px;top:312px;width:26px;height:15px;background:#f5f5f5;"></div>
<div class="r" style="left:549.0px;top:320.8px;width:2px;height:0.8px;background:#b0c6ec;"></div>
<div class="r" style="left:564px;top:312px;width:26px;height:15px;background:#f5f5f5;"></div>
<div class="r" style="left:576.0px;top:320.8px;width:2px;height:0.8px;background:#b0c6ec;"></div>
<div class="r" style="left:591px;top:312px;width:26px;height:15px;background:#f5f5f5;"></div>
<div class="t" style="left:602.30px;top:318px;font-size:6.14px;line-height:7px;height:7px;color:#4a7fd6;font-weight:normal;">0</div>
<div class="r" style="left:618px;top:312px;width:26px;height:15px;background:#ffcac6;"></div>
<div class="r" style="left:621px;top:319.3px;width:2.2px;height:0.9px;background:#3a6fd0;"></div>
<div class="t" style="left:632.20px;top:316px;font-size:6.57px;line-height:7px;height:7px;color:#3a78de;font-weight:bold;">9</div>
<div class="r" style="left:645px;top:312px;width:26px;height:15px;background:#ffcac6;"></div>
<div class="r" style="left:648px;top:319.3px;width:2.2px;height:0.9px;background:#3a6fd0;"></div>
<div class="t" style="left:659.20px;top:316px;font-size:6.57px;line-height:7px;height:7px;color:#3a78de;font-weight:bold;">9</div>
<div class="r" style="left:672px;top:312px;width:26px;height:15px;background:#9cf794;"></div>
<div class="r" style="left:675px;top:319.3px;width:2.2px;height:0.9px;background:#3a6fd0;"></div>
<div class="t" style="left:686.20px;top:316px;font-size:6.57px;line-height:7px;height:7px;color:#3a78de;font-weight:bold;">8</div>
<div class="r" style="left:699px;top:312px;width:26px;height:15px;background:#9cf794;"></div>
<div class="r" style="left:702px;top:319.3px;width:2.2px;height:0.9px;background:#3a6fd0;"></div>
<div class="t" style="left:713.20px;top:316px;font-size:6.57px;line-height:7px;height:7px;color:#3a78de;font-weight:bold;">8</div>
<div class="r" style="left:726px;top:312px;width:26px;height:15px;background:#f5f5f5;"></div>
<div class="r" style="left:738.0px;top:320.8px;width:2px;height:0.8px;background:#b0c6ec;"></div>
<div class="r" style="left:753px;top:312px;width:26px;height:15px;background:#f5f5f5;"></div>
<div class="r" style="left:765.0px;top:320.8px;width:2px;height:0.8px;background:#b0c6ec;"></div>
<div class="r" style="left:780px;top:312px;width:26px;height:15px;background:#f5f5f5;"></div>
<div class="t" style="left:791.30px;top:318px;font-size:6.14px;line-height:7px;height:7px;color:#4a7fd6;font-weight:normal;">0</div>
<div class="r" style="left:807px;top:312px;width:26px;height:15px;background:#f5f5f5;"></div>
<div class="t" style="left:818.30px;top:318px;font-size:6.14px;line-height:7px;height:7px;color:#4a7fd6;font-weight:normal;">0</div>
<div class="r" style="left:834px;top:312px;width:26px;height:15px;background:#f5f5f5;"></div>
<div class="t" style="left:845.30px;top:318px;font-size:6.14px;line-height:7px;height:7px;color:#4a7fd6;font-weight:normal;">0</div>
<div class="r" style="left:861px;top:312px;width:26px;height:15px;background:#f5f5f5;"></div>
<div class="t" style="left:872.30px;top:318px;font-size:6.14px;line-height:7px;height:7px;color:#4a7fd6;font-weight:normal;">0</div>
<div class="r" style="left:888px;top:312px;width:26px;height:15px;background:#f5f5f5;"></div>
<div class="t" style="left:899.30px;top:318px;font-size:6.14px;line-height:7px;height:7px;color:#4a7fd6;font-weight:normal;">0</div>
<div class="t" style="left:6.10px;top:331px;font-size:7.25px;line-height:9px;height:9px;color:#333;font-weight:bold;transform:translateY(0px) scaleX(0.8716);transform-origin:0 0;">MARKETING TEAM</div>
<div class="t" style="left:7.90px;top:346px;font-size:5.80px;line-height:6px;height:6px;color:#4a4a4a;font-weight:normal;transform:translateY(0px) scaleX(1.1092);transform-origin:0 0;">Tom Harvald</div>
<div class="t" style="left:122.30px;top:350px;font-size:6.14px;line-height:7px;height:7px;color:#4a7fd6;font-weight:normal;">0</div>
<div class="t" style="left:148.80px;top:350px;font-size:6.14px;line-height:7px;height:7px;color:#4a7fd6;font-weight:normal;">0</div>
<div class="r" style="left:164px;top:344px;width:26px;height:15px;background:#f5f5f5;"></div>
<div class="r" style="left:176.0px;top:352.8px;width:2px;height:0.8px;background:#b0c6ec;"></div>
<div class="r" style="left:191px;top:344px;width:25px;height:15px;background:#f5f5f5;"></div>
<div class="r" style="left:202.5px;top:352.8px;width:2px;height:0.8px;background:#b0c6ec;"></div>
<div class="r" style="left:217px;top:344px;width:26px;height:15px;background:#9cf794;"></div>
<div class="t" style="left:218.00px;top:348px;font-size:6.96px;line-height:7px;height:7px;color:#3f78d6;font-weight:normal;transform:translateY(0px) scaleX(0.7906);transform-origin:0 0;">TRP</div>
<div class="t" style="left:233.50px;top:348px;font-size:6.96px;line-height:7px;height:7px;color:#3a78de;font-weight:bold;">8</div>
<div class="r" style="left:244px;top:344px;width:25px;height:15px;background:#9cf794;"></div>
<div class="t" style="left:245.00px;top:348px;font-size:6.96px;line-height:7px;height:7px;color:#3f78d6;font-weight:normal;transform:translateY(0px) scaleX(0.7906);transform-origin:0 0;">TRP</div>
<div class="t" style="left:260.50px;top:348px;font-size:6.96px;line-height:7px;height:7px;color:#3a78de;font-weight:bold;">8</div>
<div class="t" style="left:281.30px;top:350px;font-size:6.14px;line-height:7px;height:7px;color:#4a7fd6;font-weight:normal;">0</div>
<div class="t" style="left:307.80px;top:350px;font-size:6.14px;line-height:7px;height:7px;color:#4a7fd6;font-weight:normal;">0</div>
<div class="t" style="left:334.30px;top:350px;font-size:6.14px;line-height:7px;height:7px;color:#4a7fd6;font-weight:normal;">0</div>
<div class="r" style="left:350px;top:344px;width:25px;height:15px;background:#f5f5f5;"></div>
<div class="r" style="left:361.5px;top:352.8px;width:2px;height:0.8px;background:#b0c6ec;"></div>
<div class="r" style="left:376px;top:344px;width:25px;height:15px;background:#f5f5f5;"></div>
<div class="r" style="left:387.5px;top:352.8px;width:2px;height:0.8px;background:#b0c6ec;"></div>
<div class="r" style="left:402px;top:344px;width:26px;height:15px;background:#c2dffb;"></div>
<div class="r" style="left:405.6px;top:351.2px;width:2.4px;height:0.9px;background:#3a6fd0;"></div>
<div class="r" style="left:416.8px;top:351.3px;width:2.0px;height:0.8px;background:#a9c8f0;"></div>
<div class="t" style="left:440.30px;top:350px;font-size:6.14px;line-height:7px;height:7px;color:#4a7fd6;font-weight:normal;">0</div>
<div class="t" style="left:467.30px;top:350px;font-size:6.14px;line-height:7px;height:7px;color:#4a7fd6;font-weight:normal;">0</div>
<div class="t" style="left:494.30px;top:350px;font-size:6.14px;line-height:7px;height:7px;color:#4a7fd6;font-weight:normal;">0</div>
<div class="t" style="left:521.30px;top:350px;font-size:6.14px;line-height:7px;height:7px;color:#4a7fd6;font-weight:normal;">0</div>
<div class="r" style="left:537px;top:344px;width:26px;height:15px;background:#f5f5f5;"></div>
<div class="r" style="left:549.0px;top:352.8px;width:2px;height:0.8px;background:#b0c6ec;"></div>
<div class="r" style="left:564px;top:344px;width:26px;height:15px;background:#f5f5f5;"></div>
<div class="r" style="left:576.0px;top:352.8px;width:2px;height:0.8px;background:#b0c6ec;"></div>
<div class="t" style="left:602.30px;top:350px;font-size:6.14px;line-height:7px;height:7px;color:#4a7fd6;font-weight:normal;">0</div>
<div class="r" style="left:618px;top:344px;width:26px;height:15px;background:#9cf794;"></div>
<div class="r" style="left:621px;top:351.3px;width:2.2px;height:0.9px;background:#3a6fd0;"></div>
<div class="t" style="left:632.20px;top:348px;font-size:6.57px;line-height:7px;height:7px;color:#3a78de;font-weight:bold;">8</div>
<div class="r" style="left:645px;top:344px;width:26px;height:15px;background:#9cf794;"></div>
<div class="r" style="left:648px;top:351.3px;width:2.2px;height:0.9px;background:#3a6fd0;"></div>
<div class="t" style="left:659.20px;top:348px;font-size:6.57px;line-height:7px;height:7px;color:#3a78de;font-weight:bold;">8</div>
<div class="r" style="left:672px;top:344px;width:26px;height:15px;background:#ffcac6;"></div>
<div class="r" style="left:675px;top:351.3px;width:2.2px;height:0.9px;background:#3a6fd0;"></div>
<div class="t" style="left:686.20px;top:348px;font-size:6.57px;line-height:7px;height:7px;color:#3a78de;font-weight:bold;">9</div>
<div class="t" style="left:710.30px;top:350px;font-size:6.14px;line-height:7px;height:7px;color:#4a7fd6;font-weight:normal;">0</div>
<div class="r" style="left:726px;top:344px;width:26px;height:15px;background:#f5f5f5;"></div>
<div class="r" style="left:738.0px;top:352.8px;width:2px;height:0.8px;background:#b0c6ec;"></div>
<div class="r" style="left:753px;top:344px;width:26px;height:15px;background:#f5f5f5;"></div>
<div class="r" style="left:765.0px;top:352.8px;width:2px;height:0.8px;background:#b0c6ec;"></div>
<div class="t" style="left:791.30px;top:350px;font-size:6.14px;line-height:7px;height:7px;color:#4a7fd6;font-weight:normal;">0</div>
<div class="t" style="left:818.30px;top:350px;font-size:6.14px;line-height:7px;height:7px;color:#4a7fd6;font-weight:normal;">0</div>
<div class="t" style="left:845.30px;top:350px;font-size:6.14px;line-height:7px;height:7px;color:#4a7fd6;font-weight:normal;">0</div>
<div class="t" style="left:872.30px;top:350px;font-size:6.14px;line-height:7px;height:7px;color:#4a7fd6;font-weight:normal;">0</div>
<div class="t" style="left:899.30px;top:350px;font-size:6.14px;line-height:7px;height:7px;color:#4a7fd6;font-weight:normal;">0</div>
<div class="r" style="left:5px;top:360px;width:101px;height:15px;background:#f5f5f5;"></div>
<div class="r" style="left:107px;top:360px;width:3px;height:15px;background:#f5f5f5;"></div>
<div class="t" style="left:7.90px;top:362px;font-size:5.80px;line-height:6px;height:6px;color:#4a4a4a;font-weight:normal;transform:translateY(0px) scaleX(1.1037);transform-origin:0 0;">Bob Robinson</div>
<div class="r" style="left:111px;top:360px;width:26px;height:15px;background:#f5f5f5;"></div>
<div class="t" style="left:122.30px;top:366px;font-size:6.14px;line-height:7px;height:7px;color:#4a7fd6;font-weight:normal;">0</div>
<div class="r" style="left:138px;top:360px;width:25px;height:15px;background:#f5f5f5;"></div>
<div class="t" style="left:148.80px;top:366px;font-size:6.14px;line-height:7px;height:7px;color:#4a7fd6;font-weight:normal;">0</div>
<div class="r" style="left:164px;top:360px;width:26px;height:15px;background:#f5f5f5;"></div>
<div class="r" style="left:176.0px;top:368.8px;width:2px;height:0.8px;background:#b0c6ec;"></div>
<div class="r" style="left:191px;top:360px;width:25px;height:15px;background:#f5f5f5;"></div>
<div class="r" style="left:202.5px;top:368.8px;width:2px;height:0.8px;background:#b0c6ec;"></div>
<div class="r" style="left:217px;top:360px;width:26px;height:15px;background:#f5f5f5;"></div>
<div class="t" style="left:228.30px;top:366px;font-size:6.14px;line-height:7px;height:7px;color:#4a7fd6;font-weight:normal;">0</div>
<div class="r" style="left:244px;top:360px;width:25px;height:15px;background:#f5f5f5;"></div>
<div class="t" style="left:254.80px;top:366px;font-size:6.14px;line-height:7px;height:7px;color:#4a7fd6;font-weight:normal;">0</div>
<div class="r" style="left:270px;top:360px;width:26px;height:15px;background:#ffff6e;"></div>
<div class="t" style="left:271.00px;top:364px;font-size:6.96px;line-height:7px;height:7px;color:#4a7fcf;font-weight:normal;transform:translateY(0px) scaleX(0.7691);transform-origin:0 0;">TRC</div>
<div class="t" style="left:286.30px;top:364px;font-size:6.96px;line-height:7px;height:7px;color:#3a78de;font-weight:bold;">2</div>
<div class="r" style="left:297px;top:360px;width:25px;height:15px;background:#c2dffb;"></div>
<div class="r" style="left:300.6px;top:367.2px;width:2.4px;height:0.9px;background:#3a6fd0;"></div>
<div class="r" style="left:311.8px;top:367.3px;width:2.0px;height:0.8px;background:#a9c8f0;"></div>
<div class="r" style="left:323px;top:360px;width:26px;height:15px;background:#c2dffb;"></div>
<div class="r" style="left:326.6px;top:367.2px;width:2.4px;height:0.9px;background:#3a6fd0;"></div>
<div class="r" style="left:337.8px;top:367.3px;width:2.0px;height:0.8px;background:#a9c8f0;"></div>
<div class="r" style="left:350px;top:360px;width:25px;height:15px;background:#f5f5f5;"></div>
<div class="r" style="left:361.5px;top:368.8px;width:2px;height:0.8px;background:#b0c6ec;"></div>
<div class="r" style="left:376px;top:360px;width:25px;height:15px;background:#f5f5f5;"></div>
<div class="r" style="left:387.5px;top:368.8px;width:2px;height:0.8px;background:#b0c6ec;"></div>
<div class="r" style="left:402px;top:360px;width:26px;height:15px;background:#c2dffb;"></div>
<div class="r" style="left:405.6px;top:367.2px;width:2.4px;height:0.9px;background:#3a6fd0;"></div>
<div class="r" style="left:416.8px;top:367.3px;width:2.0px;height:0.8px;background:#a9c8f0;"></div>
<div class="r" style="left:429px;top:360px;width:26px;height:15px;background:#f5f5f5;"></div>
<div class="t" style="left:440.30px;top:366px;font-size:6.14px;line-height:7px;height:7px;color:#4a7fd6;font-weight:normal;">0</div>
<div class="r" style="left:456px;top:360px;width:26px;height:15px;background:#f5f5f5;"></div>
<div class="t" style="left:467.30px;top:366px;font-size:6.14px;line-height:7px;height:7px;color:#4a7fd6;font-weight:normal;">0</div>
<div class="r" style="left:483px;top:360px;width:26px;height:15px;background:#f5f5f5;"></div>
<div class="t" style="left:494.30px;top:366px;font-size:6.14px;line-height:7px;height:7px;color:#4a7fd6;font-weight:normal;">0</div>
<div class="r" style="left:510px;top:360px;width:26px;height:15px;background:#f5f5f5;"></div>
<div class="t" style="left:521.30px;top:366px;font-size:6.14px;line-height:7px;height:7px;color:#4a7fd6;font-weight:normal;">0</div>
<div class="r" style="left:537px;top:360px;width:26px;height:15px;background:#f5f5f5;"></div>
<div class="r" style="left:549.0px;top:368.8px;width:2px;height:0.8px;background:#b0c6ec;"></div>
<div class="r" style="left:564px;top:360px;width:26px;height:15px;background:#f5f5f5;"></div>
<div class="r" style="left:576.0px;top:368.8px;width:2px;height:0.8px;background:#b0c6ec;"></div>
<div class="r" style="left:591px;top:360px;width:26px;height:15px;background:#f5f5f5;"></div>
<div class="t" style="left:602.30px;top:366px;font-size:6.14px;line-height:7px;height:7px;color:#4a7fd6;font-weight:normal;">0</div>
<div class="r" style="left:618px;top:360px;width:26px;height:15px;background:#ffcac6;"></div>
<div class="r" style="left:621px;top:367.3px;width:2.2px;height:0.9px;background:#3a6fd0;"></div>
<div class="t" style="left:632.20px;top:364px;font-size:6.57px;line-height:7px;height:7px;color:#3a78de;font-weight:bold;">9</div>
<div class="r" style="left:645px;top:360px;width:26px;height:15px;background:#ffcac6;"></div>
<div class="r" style="left:648px;top:367.3px;width:2.2px;height:0.9px;background:#3a6fd0;"></div>
<div class="t" style="left:659.20px;top:364px;font-size:6.57px;line-height:7px;height:7px;color:#3a78de;font-weight:bold;">9</div>
<div class="r" style="left:672px;top:360px;width:26px;height:15px;background:#9cf794;"></div>
<div class="r" style="left:675px;top:367.3px;width:2.2px;height:0.9px;background:#3a6fd0;"></div>
<div class="t" style="left:686.20px;top:364px;font-size:6.57px;line-height:7px;height:7px;color:#3a78de;font-weight:bold;">8</div>
<div class="r" style="left:699px;top:360px;width:26px;height:15px;background:#9cf794;"></div>
<div class="r" style="left:702px;top:367.3px;width:2.2px;height:0.9px;background:#3a6fd0;"></div>
<div class="t" style="left:713.20px;top:364px;font-size:6.57px;line-height:7px;height:7px;color:#3a78de;font-weight:bold;">8</div>
<div class="r" style="left:726px;top:360px;width:26px;height:15px;background:#f5f5f5;"></div>
<div class="r" style="left:738.0px;top:368.8px;width:2px;height:0.8px;background:#b0c6ec;"></div>
<div class="r" style="left:753px;top:360px;width:26px;height:15px;background:#f5f5f5;"></div>
<div class="r" style="left:765.0px;top:368.8px;width:2px;height:0.8px;background:#b0c6ec;"></div>
<div class="r" style="left:780px;top:360px;width:26px;height:15px;background:#f5f5f5;"></div>
<div class="t" style="left:791.30px;top:366px;font-size:6.14px;line-height:7px;height:7px;color:#4a7fd6;font-weight:normal;">0</div>
<div class="r" style="left:807px;top:360px;width:26px;height:15px;background:#f5f5f5;"></div>
<div class="t" style="left:818.30px;top:366px;font-size:6.14px;line-height:7px;height:7px;color:#4a7fd6;font-weight:normal;">0</div>
<div class="r" style="left:834px;top:360px;width:26px;height:15px;background:#f5f5f5;"></div>
<div class="t" style="left:845.30px;top:366px;font-size:6.14px;line-height:7px;height:7px;color:#4a7fd6;font-weight:normal;">0</div>
<div class="r" style="left:861px;top:360px;width:26px;height:15px;background:#f5f5f5;"></div>
<div class="t" style="left:872.30px;top:366px;font-size:6.14px;line-height:7px;height:7px;color:#4a7fd6;font-weight:normal;">0</div>
<div class="r" style="left:888px;top:360px;width:26px;height:15px;background:#f5f5f5;"></div>
<div class="t" style="left:899.30px;top:366px;font-size:6.14px;line-height:7px;height:7px;color:#4a7fd6;font-weight:normal;">0</div>
<div class="t" style="left:7.90px;top:378px;font-size:5.80px;line-height:6px;height:6px;color:#4a4a4a;font-weight:normal;transform:translateY(0px) scaleX(1.0528);transform-origin:0 0;">John Dallas</div>
<div class="t" style="left:122.30px;top:382px;font-size:6.14px;line-height:7px;height:7px;color:#4a7fd6;font-weight:normal;">0</div>
<div class="t" style="left:148.80px;top:382px;font-size:6.14px;line-height:7px;height:7px;color:#4a7fd6;font-weight:normal;">0</div>
<div class="r" style="left:164px;top:376px;width:26px;height:15px;background:#f5f5f5;"></div>
<div class="r" style="left:176.0px;top:384.8px;width:2px;height:0.8px;background:#b0c6ec;"></div>
<div class="r" style="left:191px;top:376px;width:25px;height:15px;background:#f5f5f5;"></div>
<div class="r" style="left:202.5px;top:384.8px;width:2px;height:0.8px;background:#b0c6ec;"></div>
<div class="r" style="left:217px;top:376px;width:26px;height:15px;background:#c2dffb;"></div>
<div class="r" style="left:220.6px;top:383.2px;width:2.4px;height:0.9px;background:#3a6fd0;"></div>
<div class="r" style="left:231.8px;top:383.3px;width:2.0px;height:0.8px;background:#a9c8f0;"></div>
<div class="r" style="left:244px;top:376px;width:25px;height:15px;background:#c2dffb;"></div>
<div class="r" style="left:247.6px;top:383.2px;width:2.4px;height:0.9px;background:#3a6fd0;"></div>
<div class="r" style="left:258.8px;top:383.3px;width:2.0px;height:0.8px;background:#a9c8f0;"></div>
<div class="r" style="left:270px;top:376px;width:26px;height:15px;background:#c2dffb;"></div>
<div class="r" style="left:273.6px;top:383.2px;width:2.4px;height:0.9px;background:#3a6fd0;"></div>
<div class="r" style="left:284.8px;top:383.3px;width:2.0px;height:0.8px;background:#a9c8f0;"></div>
<div class="r" style="left:297px;top:376px;width:25px;height:15px;background:#c2dffb;"></div>
<div class="r" style="left:300.6px;top:383.2px;width:2.4px;height:0.9px;background:#3a6fd0;"></div>
<div class="r" style="left:311.8px;top:383.3px;width:2.0px;height:0.8px;background:#a9c8f0;"></div>
<div class="r" style="left:323px;top:376px;width:26px;height:15px;background:#c2dffb;"></div>
<div class="r" style="left:326.6px;top:383.2px;width:2.4px;height:0.9px;background:#3a6fd0;"></div>
<div class="r" style="left:337.8px;top:383.3px;width:2.0px;height:0.8px;background:#a9c8f0;"></div>
<div class="r" style="left:350px;top:376px;width:25px;height:15px;background:#f5f5f5;"></div>
<div class="r" style="left:361.5px;top:384.8px;width:2px;height:0.8px;background:#b0c6ec;"></div>
<div class="r" style="left:376px;top:376px;width:25px;height:15px;background:#f5f5f5;"></div>
<div class="r" style="left:387.5px;top:384.8px;width:2px;height:0.8px;background:#b0c6ec;"></div>
<div class="r" style="left:402px;top:376px;width:26px;height:15px;background:#c2dffb;"></div>
<div class="r" style="left:405.6px;top:383.2px;width:2.4px;height:0.9px;background:#3a6fd0;"></div>
<div class="r" style="left:416.8px;top:383.3px;width:2.0px;height:0.8px;background:#a9c8f0;"></div>
<div class="r" style="left:429px;top:376px;width:26px;height:15px;background:#c2dffb;"></div>
<div class="r" style="left:432.6px;top:383.2px;width:2.4px;height:0.9px;background:#3a6fd0;"></div>
<div class="r" style="left:443.8px;top:383.3px;width:2.0px;height:0.8px;background:#a9c8f0;"></div>
<div class="r" style="left:456px;top:376px;width:26px;height:15px;background:#c2dffb;"></div>
<div class="r" style="left:459.6px;top:383.2px;width:2.4px;height:0.9px;background:#3a6fd0;"></div>
<div class="r" style="left:470.8px;top:383.3px;width:2.0px;height:0.8px;background:#a9c8f0;"></div>
<div class="r" style="left:483px;top:376px;width:26px;height:15px;background:#c2dffb;"></div>
<div class="r" style="left:486.6px;top:383.2px;width:2.4px;height:0.9px;background:#3a6fd0;"></div>
<div class="r" style="left:497.8px;top:383.3px;width:2.0px;height:0.8px;background:#a9c8f0;"></div>
<div class="t" style="left:521.30px;top:382px;font-size:6.14px;line-height:7px;height:7px;color:#4a7fd6;font-weight:normal;">0</div>
<div class="r" style="left:537px;top:376px;width:26px;height:15px;background:#f5f5f5;"></div>
<div class="r" style="left:549.0px;top:384.8px;width:2px;height:0.8px;background:#b0c6ec;"></div>
<div class="r" style="left:564px;top:376px;width:26px;height:15px;background:#f5f5f5;"></div>
<div class="r" style="left:576.0px;top:384.8px;width:2px;height:0.8px;background:#b0c6ec;"></div>
<div class="t" style="left:602.30px;top:382px;font-size:6.14px;line-height:7px;height:7px;color:#4a7fd6;font-weight:normal;">0</div>
<div class="r" style="left:618px;top:376px;width:26px;height:15px;background:#9cf794;"></div>
<div class="r" style="left:621px;top:383.3px;width:2.2px;height:0.9px;background:#3a6fd0;"></div>
<div class="t" style="left:632.20px;top:380px;font-size:6.57px;line-height:7px;height:7px;color:#3a78de;font-weight:bold;">8</div>
<div class="r" style="left:645px;top:376px;width:26px;height:15px;background:#9cf794;"></div>
<div class="r" style="left:648px;top:383.3px;width:2.2px;height:0.9px;background:#3a6fd0;"></div>
<div class="t" style="left:659.20px;top:380px;font-size:6.57px;line-height:7px;height:7px;color:#3a78de;font-weight:bold;">8</div>
<div class="r" style="left:672px;top:376px;width:26px;height:15px;background:#9cf794;"></div>
<div class="r" style="left:675px;top:383.3px;width:2.2px;height:0.9px;background:#3a6fd0;"></div>
<div class="t" style="left:686.20px;top:380px;font-size:6.57px;line-height:7px;height:7px;color:#3a78de;font-weight:bold;">8</div>
<div class="r" style="left:699px;top:376px;width:26px;height:15px;background:#9cf794;"></div>
<div class="r" style="left:702px;top:383.3px;width:2.2px;height:0.9px;background:#3a6fd0;"></div>
<div class="t" style="left:713.20px;top:380px;font-size:6.57px;line-height:7px;height:7px;color:#3a78de;font-weight:bold;">8</div>
<div class="r" style="left:726px;top:376px;width:26px;height:15px;background:#f5f5f5;"></div>
<div class="r" style="left:738.0px;top:384.8px;width:2px;height:0.8px;background:#b0c6ec;"></div>
<div class="r" style="left:753px;top:376px;width:26px;height:15px;background:#f5f5f5;"></div>
<div class="r" style="left:765.0px;top:384.8px;width:2px;height:0.8px;background:#b0c6ec;"></div>
<div class="r" style="left:780px;top:376px;width:26px;height:15px;background:#c2dffb;"></div>
<div class="r" style="left:783.6px;top:383.2px;width:2.4px;height:0.9px;background:#3a6fd0;"></div>
<div class="r" style="left:794.8px;top:383.3px;width:2.0px;height:0.8px;background:#a9c8f0;"></div>
<div class="r" style="left:807px;top:376px;width:26px;height:15px;background:#c2dffb;"></div>
<div class="r" style="left:810.6px;top:383.2px;width:2.4px;height:0.9px;background:#3a6fd0;"></div>
<div class="r" style="left:821.8px;top:383.3px;width:2.0px;height:0.8px;background:#a9c8f0;"></div>
<div class="r" style="left:834px;top:376px;width:26px;height:15px;background:#c2dffb;"></div>
<div class="r" style="left:837.6px;top:383.2px;width:2.4px;height:0.9px;background:#3a6fd0;"></div>
<div class="r" style="left:848.8px;top:383.3px;width:2.0px;height:0.8px;background:#a9c8f0;"></div>
<div class="r" style="left:861px;top:376px;width:26px;height:15px;background:#c2dffb;"></div>
<div class="r" style="left:864.6px;top:383.2px;width:2.4px;height:0.9px;background:#3a6fd0;"></div>
<div class="r" style="left:875.8px;top:383.3px;width:2.0px;height:0.8px;background:#a9c8f0;"></div>
<div class="r" style="left:888px;top:376px;width:26px;height:15px;background:#c2dffb;"></div>
<div class="r" style="left:891.6px;top:383.2px;width:2.4px;height:0.9px;background:#3a6fd0;"></div>
<div class="r" style="left:902.8px;top:383.3px;width:2.0px;height:0.8px;background:#a9c8f0;"></div>
<div class="r" style="left:5px;top:392px;width:905px;height:15px;background:#f5f5f5;"></div>
<div class="t" style="left:6.10px;top:395px;font-size:7.25px;line-height:9px;height:9px;color:#333;font-weight:bold;transform:translateY(0px) scaleX(0.8569);transform-origin:0 0;">NEW DEVELOPMENT TEAM</div>
<div class="t" style="left:7.90px;top:410px;font-size:5.80px;line-height:6px;height:6px;color:#4a4a4a;font-weight:normal;transform:translateY(0px) scaleX(1.1092);transform-origin:0 0;">Tom Harvald</div>
<div class="t" style="left:122.30px;top:414px;font-size:6.14px;line-height:7px;height:7px;color:#4a7fd6;font-weight:normal;">0</div>
<div class="t" style="left:148.80px;top:414px;font-size:6.14px;line-height:7px;height:7px;color:#4a7fd6;font-weight:normal;">0</div>
<div class="r" style="left:164px;top:408px;width:26px;height:15px;background:#f5f5f5;"></div>
<div class="r" style="left:176.0px;top:416.8px;width:2px;height:0.8px;background:#b0c6ec;"></div>
<div class="r" style="left:191px;top:408px;width:25px;height:15px;background:#f5f5f5;"></div>
<div class="r" style="left:202.5px;top:416.8px;width:2px;height:0.8px;background:#b0c6ec;"></div>
<div class="r" style="left:217px;top:408px;width:26px;height:15px;background:#9cf794;"></div>
<div class="t" style="left:218.00px;top:412px;font-size:6.96px;line-height:7px;height:7px;color:#3f78d6;font-weight:normal;transform:translateY(0px) scaleX(0.7906);transform-origin:0 0;">TRP</div>
<div class="t" style="left:233.50px;top:412px;font-size:6.96px;line-height:7px;height:7px;color:#3a78de;font-weight:bold;">8</div>
<div class="r" style="left:244px;top:408px;width:25px;height:15px;background:#9cf794;"></div>
<div class="t" style="left:245.00px;top:412px;font-size:6.96px;line-height:7px;height:7px;color:#3f78d6;font-weight:normal;transform:translateY(0px) scaleX(0.7906);transform-origin:0 0;">TRP</div>
<div class="t" style="left:260.50px;top:412px;font-size:6.96px;line-height:7px;height:7px;color:#3a78de;font-weight:bold;">8</div>
<div class="t" style="left:281.30px;top:414px;font-size:6.14px;line-height:7px;height:7px;color:#4a7fd6;font-weight:normal;">0</div>
<div class="t" style="left:307.80px;top:414px;font-size:6.14px;line-height:7px;height:7px;color:#4a7fd6;font-weight:normal;">0</div>
<div class="t" style="left:334.30px;top:414px;font-size:6.14px;line-height:7px;height:7px;color:#4a7fd6;font-weight:normal;">0</div>
<div class="r" style="left:350px;top:408px;width:25px;height:15px;background:#f5f5f5;"></div>
<div class="r" style="left:361.5px;top:416.8px;width:2px;height:0.8px;background:#b0c6ec;"></div>
<div class="r" style="left:376px;top:408px;width:25px;height:15px;background:#f5f5f5;"></div>
<div class="r" style="left:387.5px;top:416.8px;width:2px;height:0.8px;background:#b0c6ec;"></div>
<div class="r" style="left:402px;top:408px;width:26px;height:15px;background:#c2dffb;"></div>
<div class="r" style="left:405.6px;top:415.2px;width:2.4px;height:0.9px;background:#3a6fd0;"></div>
<div class="r" style="left:416.8px;top:415.3px;width:2.0px;height:0.8px;background:#a9c8f0;"></div>
<div class="t" style="left:440.30px;top:414px;font-size:6.14px;line-height:7px;height:7px;color:#4a7fd6;font-weight:normal;">0</div>
<div class="t" style="left:467.30px;top:414px;font-size:6.14px;line-height:7px;height:7px;color:#4a7fd6;font-weight:normal;">0</div>
<div class="t" style="left:494.30px;top:414px;font-size:6.14px;line-height:7px;height:7px;color:#4a7fd6;font-weight:normal;">0</div>
<div class="t" style="left:521.30px;top:414px;font-size:6.14px;line-height:7px;height:7px;color:#4a7fd6;font-weight:normal;">0</div>
<div class="r" style="left:537px;top:408px;width:26px;height:15px;background:#f5f5f5;"></div>
<div class="r" style="left:549.0px;top:416.8px;width:2px;height:0.8px;background:#b0c6ec;"></div>
<div class="r" style="left:564px;top:408px;width:26px;height:15px;background:#f5f5f5;"></div>
<div class="r" style="left:576.0px;top:416.8px;width:2px;height:0.8px;background:#b0c6ec;"></div>
<div class="t" style="left:602.30px;top:414px;font-size:6.14px;line-height:7px;height:7px;color:#4a7fd6;font-weight:normal;">0</div>
<div class="r" style="left:618px;top:408px;width:26px;height:15px;background:#9cf794;"></div>
<div class="r" style="left:621px;top:415.3px;width:2.2px;height:0.9px;background:#3a6fd0;"></div>
<div class="t" style="left:632.20px;top:412px;font-size:6.57px;line-height:7px;height:7px;color:#3a78de;font-weight:bold;">8</div>
<div class="r" style="left:645px;top:408px;width:26px;height:15px;background:#9cf794;"></div>
<div class="r" style="left:648px;top:415.3px;width:2.2px;height:0.9px;background:#3a6fd0;"></div>
<div class="t" style="left:659.20px;top:412px;font-size:6.57px;line-height:7px;height:7px;color:#3a78de;font-weight:bold;">8</div>
<div class="r" style="left:672px;top:408px;width:26px;height:15px;background:#ffcac6;"></div>
<div class="r" style="left:675px;top:415.3px;width:2.2px;height:0.9px;background:#3a6fd0;"></div>
<div class="t" style="left:686.20px;top:412px;font-size:6.57px;line-height:7px;height:7px;color:#3a78de;font-weight:bold;">9</div>
<div class="t" style="left:710.30px;top:414px;font-size:6.14px;line-height:7px;height:7px;color:#4a7fd6;font-weight:normal;">0</div>
<div class="r" style="left:726px;top:408px;width:26px;height:15px;background:#f5f5f5;"></div>
<div class="r" style="left:738.0px;top:416.8px;width:2px;height:0.8px;background:#b0c6ec;"></div>
<div class="r" style="left:753px;top:408px;width:26px;height:15px;background:#f5f5f5;"></div>
<div class="r" style="left:765.0px;top:416.8px;width:2px;height:0.8px;background:#b0c6ec;"></div>
<div class="t" style="left:791.30px;top:414px;font-size:6.14px;line-height:7px;height:7px;color:#4a7fd6;font-weight:normal;">0</div>
<div class="t" style="left:818.30px;top:414px;font-size:6.14px;line-height:7px;height:7px;color:#4a7fd6;font-weight:normal;">0</div>
<div class="t" style="left:845.30px;top:414px;font-size:6.14px;line-height:7px;height:7px;color:#4a7fd6;font-weight:normal;">0</div>
<div class="t" style="left:872.30px;top:414px;font-size:6.14px;line-height:7px;height:7px;color:#4a7fd6;font-weight:normal;">0</div>
<div class="t" style="left:899.30px;top:414px;font-size:6.14px;line-height:7px;height:7px;color:#4a7fd6;font-weight:normal;">0</div>
<div class="r" style="left:5px;top:424px;width:101px;height:15px;background:#f5f5f5;"></div>
<div class="r" style="left:107px;top:424px;width:3px;height:15px;background:#f5f5f5;"></div>
<div class="t" style="left:7.90px;top:426px;font-size:5.80px;line-height:6px;height:6px;color:#4a4a4a;font-weight:normal;transform:translateY(0px) scaleX(1.1037);transform-origin:0 0;">Bob Robinson</div>
<div class="r" style="left:111px;top:424px;width:26px;height:15px;background:#f5f5f5;"></div>
<div class="t" style="left:122.30px;top:430px;font-size:6.14px;line-height:7px;height:7px;color:#4a7fd6;font-weight:normal;">0</div>
<div class="r" style="left:138px;top:424px;width:25px;height:15px;background:#f5f5f5;"></div>
<div class="t" style="left:148.80px;top:430px;font-size:6.14px;line-height:7px;height:7px;color:#4a7fd6;font-weight:normal;">0</div>
<div class="r" style="left:164px;top:424px;width:26px;height:15px;background:#f5f5f5;"></div>
<div class="r" style="left:176.0px;top:432.8px;width:2px;height:0.8px;background:#b0c6ec;"></div>
<div class="r" style="left:191px;top:424px;width:25px;height:15px;background:#f5f5f5;"></div>
<div class="r" style="left:202.5px;top:432.8px;width:2px;height:0.8px;background:#b0c6ec;"></div>
<div class="r" style="left:217px;top:424px;width:26px;height:15px;background:#f5f5f5;"></div>
<div class="t" style="left:228.30px;top:430px;font-size:6.14px;line-height:7px;height:7px;color:#4a7fd6;font-weight:normal;">0</div>
<div class="r" style="left:244px;top:424px;width:25px;height:15px;background:#f5f5f5;"></div>
<div class="t" style="left:254.80px;top:430px;font-size:6.14px;line-height:7px;height:7px;color:#4a7fd6;font-weight:normal;">0</div>
<div class="r" style="left:270px;top:424px;width:26px;height:15px;background:#ffff6e;"></div>
<div class="t" style="left:271.00px;top:428px;font-size:6.96px;line-height:7px;height:7px;color:#4a7fcf;font-weight:normal;transform:translateY(0px) scaleX(0.7691);transform-origin:0 0;">TRC</div>
<div class="t" style="left:286.30px;top:428px;font-size:6.96px;line-height:7px;height:7px;color:#3a78de;font-weight:bold;">2</div>
<div class="r" style="left:297px;top:424px;width:25px;height:15px;background:#c2dffb;"></div>
<div class="r" style="left:300.6px;top:431.2px;width:2.4px;height:0.9px;background:#3a6fd0;"></div>
<div class="r" style="left:311.8px;top:431.3px;width:2.0px;height:0.8px;background:#a9c8f0;"></div>
<div class="r" style="left:323px;top:424px;width:26px;height:15px;background:#c2dffb;"></div>
<div class="r" style="left:326.6px;top:431.2px;width:2.4px;height:0.9px;background:#3a6fd0;"></div>
<div class="r" style="left:337.8px;top:431.3px;width:2.0px;height:0.8px;background:#a9c8f0;"></div>
<div class="r" style="left:350px;top:424px;width:25px;height:15px;background:#f5f5f5;"></div>
<div class="r" style="left:361.5px;top:432.8px;width:2px;height:0.8px;background:#b0c6ec;"></div>
<div class="r" style="left:376px;top:424px;width:25px;height:15px;background:#f5f5f5;"></div>
<div class="r" style="left:387.5px;top:432.8px;width:2px;height:0.8px;background:#b0c6ec;"></div>
<div class="r" style="left:402px;top:424px;width:26px;height:15px;background:#c2dffb;"></div>
<div class="r" style="left:405.6px;top:431.2px;width:2.4px;height:0.9px;background:#3a6fd0;"></div>
<div class="r" style="left:416.8px;top:431.3px;width:2.0px;height:0.8px;background:#a9c8f0;"></div>
<div class="r" style="left:429px;top:424px;width:26px;height:15px;background:#f5f5f5;"></div>
<div class="t" style="left:440.30px;top:430px;font-size:6.14px;line-height:7px;height:7px;color:#4a7fd6;font-weight:normal;">0</div>
<div class="r" style="left:456px;top:424px;width:26px;height:15px;background:#f5f5f5;"></div>
<div class="t" style="left:467.30px;top:430px;font-size:6.14px;line-height:7px;height:7px;color:#4a7fd6;font-weight:normal;">0</div>
<div class="r" style="left:483px;top:424px;width:26px;height:15px;background:#f5f5f5;"></div>
<div class="t" style="left:494.30px;top:430px;font-size:6.14px;line-height:7px;height:7px;color:#4a7fd6;font-weight:normal;">0</div>
<div class="r" style="left:510px;top:424px;width:26px;height:15px;background:#f5f5f5;"></div>
<div class="t" style="left:521.30px;top:430px;font-size:6.14px;line-height:7px;height:7px;color:#4a7fd6;font-weight:normal;">0</div>
<div class="r" style="left:537px;top:424px;width:26px;height:15px;background:#f5f5f5;"></div>
<div class="r" style="left:549.0px;top:432.8px;width:2px;height:0.8px;background:#b0c6ec;"></div>
<div class="r" style="left:564px;top:424px;width:26px;height:15px;background:#f5f5f5;"></div>
<div class="r" style="left:576.0px;top:432.8px;width:2px;height:0.8px;background:#b0c6ec;"></div>
<div class="r" style="left:591px;top:424px;width:26px;height:15px;background:#f5f5f5;"></div>
<div class="t" style="left:602.30px;top:430px;font-size:6.14px;line-height:7px;height:7px;color:#4a7fd6;font-weight:normal;">0</div>
<div class="r" style="left:618px;top:424px;width:26px;height:15px;background:#ffcac6;"></div>
<div class="r" style="left:621px;top:431.3px;width:2.2px;height:0.9px;background:#3a6fd0;"></div>
<div class="t" style="left:632.20px;top:428px;font-size:6.57px;line-height:7px;height:7px;color:#3a78de;font-weight:bold;">9</div>
<div class="r" style="left:645px;top:424px;width:26px;height:15px;background:#ffcac6;"></div>
<div class="r" style="left:648px;top:431.3px;width:2.2px;height:0.9px;background:#3a6fd0;"></div>
<div class="t" style="left:659.20px;top:428px;font-size:6.57px;line-height:7px;height:7px;color:#3a78de;font-weight:bold;">9</div>
<div class="r" style="left:672px;top:424px;width:26px;height:15px;background:#9cf794;"></div>
<div class="r" style="left:675px;top:431.3px;width:2.2px;height:0.9px;background:#3a6fd0;"></div>
<div class="t" style="left:686.20px;top:428px;font-size:6.57px;line-height:7px;height:7px;color:#3a78de;font-weight:bold;">8</div>
<div class="r" style="left:699px;top:424px;width:26px;height:15px;background:#9cf794;"></div>
<div class="r" style="left:702px;top:431.3px;width:2.2px;height:0.9px;background:#3a6fd0;"></div>
<div class="t" style="left:713.20px;top:428px;font-size:6.57px;line-height:7px;height:7px;color:#3a78de;font-weight:bold;">8</div>
<div class="r" style="left:726px;top:424px;width:26px;height:15px;background:#f5f5f5;"></div>
<div class="r" style="left:738.0px;top:432.8px;width:2px;height:0.8px;background:#b0c6ec;"></div>
<div class="r" style="left:753px;top:424px;width:26px;height:15px;background:#f5f5f5;"></div>
<div class="r" style="left:765.0px;top:432.8px;width:2px;height:0.8px;background:#b0c6ec;"></div>
<div class="r" style="left:780px;top:424px;width:26px;height:15px;background:#f5f5f5;"></div>
<div class="t" style="left:791.30px;top:430px;font-size:6.14px;line-height:7px;height:7px;color:#4a7fd6;font-weight:normal;">0</div>
<div class="r" style="left:807px;top:424px;width:26px;height:15px;background:#f5f5f5;"></div>
<div class="t" style="left:818.30px;top:430px;font-size:6.14px;line-height:7px;height:7px;color:#4a7fd6;font-weight:normal;">0</div>
<div class="r" style="left:834px;top:424px;width:26px;height:15px;background:#f5f5f5;"></div>
<div class="t" style="left:845.30px;top:430px;font-size:6.14px;line-height:7px;height:7px;color:#4a7fd6;font-weight:normal;">0</div>
<div class="r" style="left:861px;top:424px;width:26px;height:15px;background:#f5f5f5;"></div>
<div class="t" style="left:872.30px;top:430px;font-size:6.14px;line-height:7px;height:7px;color:#4a7fd6;font-weight:normal;">0</div>
<div class="r" style="left:888px;top:424px;width:26px;height:15px;background:#f5f5f5;"></div>
<div class="t" style="left:899.30px;top:430px;font-size:6.14px;line-height:7px;height:7px;color:#4a7fd6;font-weight:normal;">0</div>
<div class="t" style="left:6.10px;top:443px;font-size:7.25px;line-height:9px;height:9px;color:#333;font-weight:bold;transform:translateY(0px) scaleX(0.8279);transform-origin:0 0;">PROJECT TEAM</div>
<div class="r" style="left:0px;top:449px;width:910px;height:1px;background:#e6e6e6;"></div>
</div>
<div class="r" style="left:910px;top:0;width:9px;height:450px;background:#f1f1f1"></div>
<div class="r" style="left:911px;top:8.5px;width:6px;height:257px;background:#c1c1c1"></div>
<svg class="r" style="left:910px;top:0" width="9" height="9" viewBox="0 0 9 9"><polygon points="2.5,6 6.5,6 4.5,4" fill="#a3a3a3"/></svg>
<svg class="r" style="left:910px;top:441px" width="9" height="9" viewBox="0 0 9 9"><polygon points="2.3,2.6 6.7,2.6 4.5,5" fill="#505050"/></svg>
</body></html>
